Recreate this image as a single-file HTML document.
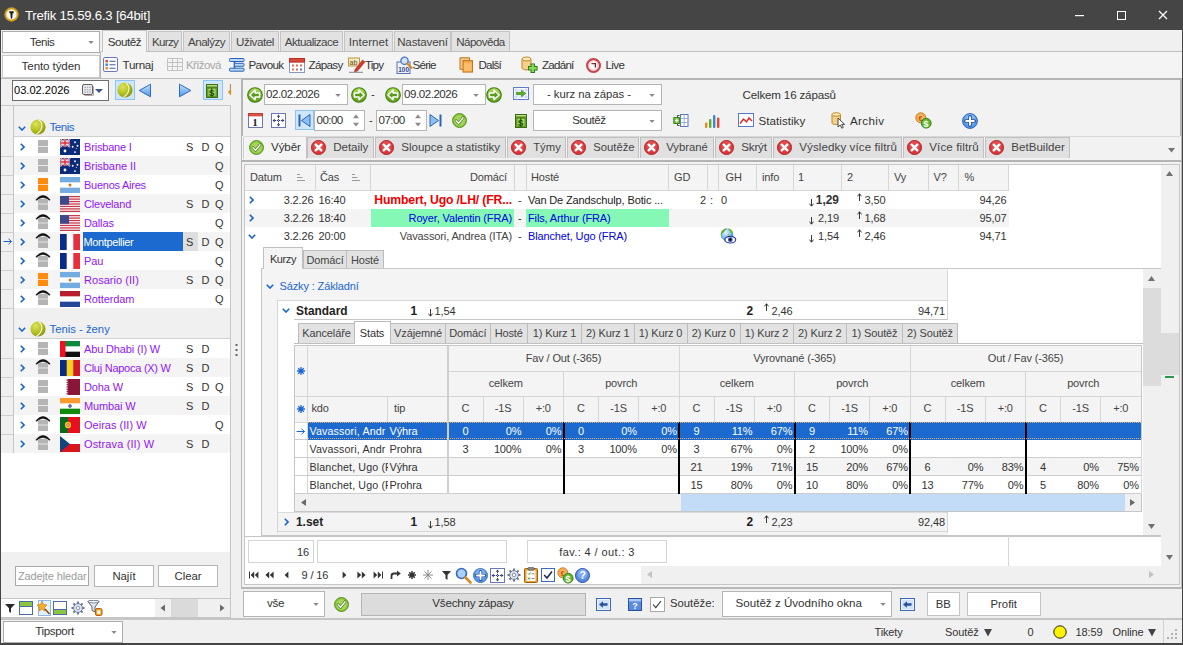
<!DOCTYPE html>
<html><head><meta charset="utf-8"><title>Trefik</title><style>
html,body{margin:0;padding:0}
body{width:1183px;height:645px;overflow:hidden;background:#f0f0f0;font-family:"Liberation Sans",sans-serif;position:relative}
.a{position:absolute;box-sizing:border-box;white-space:nowrap;overflow:hidden}
.t{position:absolute;white-space:nowrap}
svg{display:block}
</style></head><body>
<div class="a" style="left:0px;top:0px;width:1183px;height:30px;background:#454545"></div>
<svg class="a" style="left:3.5px;top:7.3px" width="16" height="16" viewBox="0 0 16 16"><circle cx="7.5" cy="7.5" r="7.2" fill="#c8981c"/><circle cx="7.5" cy="7.5" r="6" fill="#e0b030"/><circle cx="7.5" cy="7.5" r="5" fill="#fbf8f0"/><path d="M5.3 4.2 H9.7 V6.2 H8.6 L8.3 10.8 L7.5 12 L6.7 10.8 L6.4 6.2 H5.3 Z" fill="#1c1c1c"/></svg>
<div class="t" style="left:25px;top:6.5px;font-size:13.2px;line-height:17px;color:#fff;letter-spacing:-0.231px;">Trefik 15.59.6.3 [64bit]</div>
<svg class="a" style="left:1074px;top:14px" width="12" height="3" viewBox="0 0 12 3"><rect x="1" y="1" width="9" height="1.2" fill="#fff"/></svg>
<svg class="a" style="left:1116px;top:10px" width="11" height="11" viewBox="0 0 11 11"><rect x="1.5" y="1.5" width="8" height="8" fill="none" stroke="#fff" stroke-width="1"/></svg>
<svg class="a" style="left:1158px;top:10px" width="11" height="11" viewBox="0 0 11 11"><path d="M1 1 L9 9 M9 1 L1 9" stroke="#fff" stroke-width="1.2"/></svg>
<div class="a" style="left:2px;top:31px;width:98px;height:22px;background:#fff;border:1px solid #adadad"></div>
<div class="t" style="left:12px;top:33.5px;font-size:11.6px;line-height:16px;color:#333;width:60px;text-align:center;letter-spacing:-0.516px;">Tenis</div>
<svg class="a" style="left:87.5px;top:41.0px" width="6" height="3" viewBox="0 0 6 3"><path d="M0.3 0 H5.7 L3 3 Z" fill="#8a8a8a"/></svg>
<div class="a" style="left:101px;top:51px;width:1082px;height:1px;background:#c0c0c0"></div>
<div class="a" style="left:148px;top:31px;width:34px;height:20px;background:#e2e2e2;border:1px solid #c4c4c4;border-bottom:none"></div>
<div class="t" style="left:148px;top:33.5px;font-size:11.6px;line-height:16px;color:#444;width:34px;text-align:center;letter-spacing:-0.69px;">Kurzy</div>
<div class="a" style="left:183px;top:31px;width:47px;height:20px;background:#e2e2e2;border:1px solid #c4c4c4;border-bottom:none"></div>
<div class="t" style="left:183px;top:33.5px;font-size:11.6px;line-height:16px;color:#444;width:47px;text-align:center;letter-spacing:-0.517px;">Analýzy</div>
<div class="a" style="left:231px;top:31px;width:48px;height:20px;background:#e2e2e2;border:1px solid #c4c4c4;border-bottom:none"></div>
<div class="t" style="left:231px;top:33.5px;font-size:11.6px;line-height:16px;color:#444;width:48px;text-align:center;letter-spacing:-0.42px;">Uživatel</div>
<div class="a" style="left:280px;top:31px;width:63px;height:20px;background:#e2e2e2;border:1px solid #c4c4c4;border-bottom:none"></div>
<div class="t" style="left:280px;top:33.5px;font-size:11.6px;line-height:16px;color:#444;width:63px;text-align:center;letter-spacing:-0.547px;">Aktualizace</div>
<div class="a" style="left:344px;top:31px;width:49px;height:20px;background:#e2e2e2;border:1px solid #c4c4c4;border-bottom:none"></div>
<div class="t" style="left:344px;top:33.5px;font-size:11.6px;line-height:16px;color:#444;width:49px;text-align:center;letter-spacing:0.045px;">Internet</div>
<div class="a" style="left:394px;top:31px;width:57px;height:20px;background:#e2e2e2;border:1px solid #c4c4c4;border-bottom:none"></div>
<div class="t" style="left:394px;top:33.5px;font-size:11.6px;line-height:16px;color:#444;width:57px;text-align:center;letter-spacing:-0.17px;">Nastavení</div>
<div class="a" style="left:451px;top:31px;width:59px;height:20px;background:#e2e2e2;border:1px solid #c4c4c4;border-bottom:none"></div>
<div class="t" style="left:451px;top:33.5px;font-size:11.6px;line-height:16px;color:#444;width:59px;text-align:center;letter-spacing:-0.548px;">Nápověda</div>
<div class="a" style="left:102px;top:30px;width:45px;height:23px;background:#f4f4f4;border:1px solid #c4c4c4;border-bottom:none"></div>
<div class="t" style="left:102px;top:33.5px;font-size:11.6px;line-height:16px;color:#333;width:45px;text-align:center;letter-spacing:-0.436px;">Soutěž</div>
<div class="a" style="left:101px;top:52px;width:1082px;height:26px;background:#f4f4f4"></div>
<div class="a" style="left:2px;top:55px;width:98px;height:23px;background:#fff;border:1px solid #c8c8c8"></div>
<div class="t" style="left:2px;top:57.5px;font-size:11.6px;line-height:16px;color:#333;width:98px;text-align:center;letter-spacing:-0.107px;">Tento týden</div>
<div class="a" style="left:100px;top:52px;width:1px;height:26px;background:#b4b4b4"></div>
<svg class="a" style="left:103px;top:57px" width="15" height="15" viewBox="0 0 15 15"><rect x="0.5" y="0.5" width="14" height="14" rx="1.5" fill="#fdfdff" stroke="#6a78c0"/><rect x="2.5" y="3" width="2.4" height="2.4" fill="#d8452c"/><rect x="2.5" y="6.5" width="2.4" height="2.4" fill="#3a78d8"/><rect x="2.5" y="10" width="2.4" height="2.4" fill="#e08a1c"/><path d="M6.5 4.2 H12.5 M6.5 7.7 H12.5 M6.5 11.2 H12.5" stroke="#4a5a9a" stroke-width="1.1"/></svg>
<div class="t" style="left:122.5px;top:57.0px;font-size:11.6px;line-height:16px;color:#333;letter-spacing:-0.259px;">Turnaj</div>
<svg class="a" style="left:167px;top:58px" width="16" height="13" viewBox="0 0 16 13"><path d="M0.5 0.5 H15.5 V12.5 H0.5 Z M0.5 4.5 H15.5 M0.5 8.5 H15.5 M5.5 0.5 V12.5 M10.5 0.5 V12.5" fill="#f4f4f4" stroke="#c2c2c2"/></svg>
<div class="t" style="left:186px;top:57.0px;font-size:11.6px;line-height:16px;color:#a8a8a8;letter-spacing:-0.661px;">Křížová</div>
<svg class="a" style="left:229px;top:58px" width="16" height="14" viewBox="0 0 16 14"><path d="M5.5 2 V12" stroke="#2a62b8" stroke-width="1.6"/><g fill="#bcd8f6" stroke="#2a62b8" stroke-width="1"><rect x="0.5" y="0.5" width="14.5" height="3" rx="0.8"/><rect x="5.5" y="5.3" width="9.5" height="3" rx="0.8"/><rect x="0.5" y="10.2" width="14.5" height="3" rx="0.8"/></g></svg>
<div class="t" style="left:248.5px;top:57.0px;font-size:11.6px;line-height:16px;color:#333;letter-spacing:-0.615px;">Pavouk</div>
<svg class="a" style="left:289px;top:58px" width="16" height="15" viewBox="0 0 16 15"><rect x="0.5" y="0.5" width="15" height="14" fill="#fff" stroke="#8a98b8"/><rect x="0.5" y="0.5" width="15" height="3.6" fill="#d84838" stroke="#b83020"/><g fill="#e06a5a"><rect x="3" y="6.5" width="2" height="2"/><rect x="7" y="6.5" width="2" height="2"/><rect x="11" y="6.5" width="2" height="2"/><rect x="3" y="10.5" width="2" height="2"/><rect x="7" y="10.5" width="2" height="2"/></g><rect x="11" y="10.5" width="2" height="2" fill="#4a78d0"/></svg>
<div class="t" style="left:308.5px;top:57.0px;font-size:11.6px;line-height:16px;color:#333;letter-spacing:-0.64px;">Zápasy</div>
<svg class="a" style="left:348px;top:57px" width="18" height="16" viewBox="0 0 18 16"><rect x="0.5" y="1" width="11" height="8" fill="#f8e8b8" stroke="#b89848"/><text x="1.5" y="7.6" font-size="7" font-family="Liberation Sans" fill="#5a4a2a">ab</text><path d="M7 12.5 L14.5 3 L17 5 L9.5 14 L6.5 15 Z" fill="#d83828" stroke="#8a2018" stroke-width="0.5"/><path d="M1 15.3 H15" stroke="#888" stroke-width="1"/></svg>
<div class="t" style="left:365px;top:57.0px;font-size:11.6px;line-height:16px;color:#333;letter-spacing:-0.846px;">Tipy</div>
<svg class="a" style="left:396px;top:56px" width="17" height="18" viewBox="0 0 17 18"><rect x="1" y="6" width="13" height="11.5" fill="#eef2fc" stroke="#5a70b8"/><text x="2.2" y="15.6" font-size="6.5" font-family="Liberation Sans" fill="#3a4a8a" font-weight="bold">100</text><circle cx="8.5" cy="4.8" r="3.6" fill="#cfe4f8" stroke="#4a78c0" stroke-width="1.3"/><path d="M11.2 7.5 L15.5 11.8" stroke="#d88828" stroke-width="2.2" stroke-linecap="round"/></svg>
<div class="t" style="left:412.5px;top:57.0px;font-size:11.6px;line-height:16px;color:#333;letter-spacing:-0.776px;">Série</div>
<svg class="a" style="left:459px;top:57px" width="15" height="16" viewBox="0 0 15 16"><rect x="1" y="0.8" width="9.5" height="11.5" fill="#f4c888" stroke="#c07820"/><rect x="4" y="3.6" width="9.5" height="11.5" fill="#f8a848" stroke="#c07820"/><rect x="5" y="6" width="7.5" height="8" fill="#fbbf6c"/></svg>
<div class="t" style="left:478.5px;top:57.0px;font-size:11.6px;line-height:16px;color:#333;letter-spacing:-0.806px;">Další</div>
<svg class="a" style="left:521px;top:56px" width="17" height="18" viewBox="0 0 17 18"><path d="M1 3 V12 C1 14.5 10 14.5 10 12 V3" fill="#f4d08a" stroke="#c08a28"/><ellipse cx="5.5" cy="3" rx="4.5" ry="2" fill="#fbe8b8" stroke="#c08a28"/><path d="M11.8 7.4 V17 M7 12.2 H16.6" stroke="#2a7a1c" stroke-width="4.4"/><path d="M11.8 8.3 V16.1 M7.9 12.2 H15.7" stroke="#8ad858" stroke-width="2.5"/></svg>
<div class="t" style="left:542px;top:57.0px;font-size:11.6px;line-height:16px;color:#333;letter-spacing:-0.752px;">Zadání</div>
<svg class="a" style="left:586px;top:57.5px" width="15" height="15" viewBox="0 0 15 15"><circle cx="7.5" cy="7.5" r="6.4" fill="#fff" stroke="#c8444c" stroke-width="2.2"/><circle cx="7.5" cy="7.5" r="4.6" fill="none" stroke="#eeb4b8" stroke-width="0.9"/><path d="M5.4 5.6 H9.4 V9.6" fill="none" stroke="#7a2c34" stroke-width="1.4"/></svg>
<div class="t" style="left:605.5px;top:57.0px;font-size:11.6px;line-height:16px;color:#333;letter-spacing:-0.62px;">Live</div>
<div class="a" style="left:1px;top:78px;width:1181px;height:1px;background:#bcbcbc"></div>
<div class="a" style="left:0px;top:80px;width:232px;height:539px;background:#f0f0f0"></div>
<div class="a" style="left:12px;top:80px;width:97px;height:21px;background:#fff;border:1px solid #6e6e6e"></div>
<div class="t" style="left:14px;top:82.95px;font-size:11.1px;line-height:15.1px;color:#000;">03.02.2026</div>
<svg class="a" style="left:82px;top:84px" width="12" height="12" viewBox="0 0 12 12"><path d="M2.5 11.5 H11.5 V2.5" stroke="#b0a8a8" fill="none"/><rect x="0.5" y="0.5" width="10" height="10" rx="1.5" fill="#ececf0" stroke="#6a5c5c"/><g fill="#a8b0c0"><rect x="2.4" y="2.6" width="1.5" height="1.5"/><rect x="4.8" y="2.6" width="1.5" height="1.5"/><rect x="7.2" y="2.6" width="1.5" height="1.5"/><rect x="2.4" y="5" width="1.5" height="1.5"/><rect x="4.8" y="5" width="1.5" height="1.5"/><rect x="7.2" y="5" width="1.5" height="1.5"/><rect x="2.4" y="7.4" width="1.5" height="1.5"/><rect x="4.8" y="7.4" width="1.5" height="1.5"/><rect x="7.2" y="7.4" width="1.5" height="1.5"/></g></svg>
<svg class="a" style="left:95px;top:89px" width="8" height="4" viewBox="0 0 8 4"><path d="M0 0 H8 L4.0 4 Z" fill="#3a5a8a"/></svg>
<div class="a" style="left:114.5px;top:80px;width:20.5px;height:20px;background:#cfe6fa;border:1px solid #8cc4f4"></div>
<svg class="a" style="left:116.5px;top:82px" width="16" height="16" viewBox="0 0 16 16"><defs><radialGradient id="bl1" cx="0.35" cy="0.3" r="0.8"><stop offset="0" stop-color="#dce458"/><stop offset="0.55" stop-color="#b4c020"/><stop offset="1" stop-color="#7c8c0c"/></radialGradient></defs><circle cx="8" cy="8" r="7.6" fill="url(#bl1)"/><path d="M8.6 0.8 C13.4 3.6 13 11.4 6.6 15" fill="none" stroke="#f4f6dc" stroke-width="1.1"/></svg>
<svg class="a" style="left:138px;top:83px" width="14" height="15" viewBox="0 0 14 15"><defs><linearGradient id="tg1" x1="0" y1="0" x2="0" y2="1"><stop offset="0" stop-color="#c4e2fc"/><stop offset="1" stop-color="#4e96e6"/></linearGradient></defs><path d="M12.5 1.2 V13.8 L1.2 7.5 Z" fill="url(#tg1)" stroke="#2f6cc0" stroke-width="1"/></svg>
<svg class="a" style="left:178px;top:83px" width="14" height="15" viewBox="0 0 14 15"><defs><linearGradient id="tg2" x1="0" y1="0" x2="0" y2="1"><stop offset="0" stop-color="#c4e2fc"/><stop offset="1" stop-color="#4e96e6"/></linearGradient></defs><path d="M1.5 1.2 V13.8 L12.8 7.5 Z" fill="url(#tg2)" stroke="#2f6cc0" stroke-width="1"/></svg>
<div class="a" style="left:203px;top:80px;width:20px;height:20px;background:#cfe6fa;border:1px solid #8cc4f4"></div>
<svg class="a" style="left:206px;top:84px" width="12" height="14" viewBox="0 0 12 14"><rect x="0.5" y="0.5" width="11" height="13" fill="#6aa82c" stroke="#3c6e12"/><rect x="0.5" y="0.5" width="11" height="2.6" fill="#b8dc7c" stroke="#3c6e12"/><rect x="2" y="4.2" width="8" height="8" fill="#a4d65a" stroke="#4a7e1a" stroke-width="0.6"/><text x="3.1" y="11.6" font-size="9.5" font-weight="bold" font-family="Liberation Sans" fill="#1c4c08">$</text><path d="M5.75 3.8 V12.8" stroke="#1c4c08" stroke-width="0.9"/></svg>
<svg class="a" style="left:228px;top:84px" width="4" height="14" viewBox="0 0 4 14"><path d="M2.4 0 V11" stroke="#c8782c" stroke-width="1" fill="none"/><circle cx="1.8" cy="8" r="1.6" fill="#e08a1c"/></svg>
<div class="a" style="left:1px;top:105px;width:230px;height:494px;background:#f0f0f0;border:1px solid #c6c6c6;border-left:none"></div>
<div class="a" style="left:13px;top:105px;width:1px;height:494px;background:#c6c6c6"></div>
<div class="a" style="left:14px;top:106px;width:216px;height:30px;background:#f0f0f0"></div>
<div class="a" style="left:14px;top:135.5px;width:216px;height:1px;background:#d0d0d0"></div>
<svg class="a" style="left:18px;top:125.5px" width="8" height="5" viewBox="0 0 8 5"><path d="M0.8 0.8 L4 4 L7.2 0.8" fill="none" stroke="#1766c8" stroke-width="1.6"/></svg>
<svg class="a" style="left:29.5px;top:119px" width="16" height="16" viewBox="0 0 16 16"><defs><radialGradient id="bl2" cx="0.35" cy="0.3" r="0.8"><stop offset="0" stop-color="#dce458"/><stop offset="0.55" stop-color="#b4c020"/><stop offset="1" stop-color="#7c8c0c"/></radialGradient></defs><circle cx="8" cy="8" r="7.6" fill="url(#bl2)"/><path d="M8.6 0.8 C13.4 3.6 13 11.4 6.6 15" fill="none" stroke="#f4f6dc" stroke-width="1.1"/></svg>
<div class="t" style="left:49.5px;top:119.0px;font-size:11.6px;line-height:16px;color:#1a66d0;letter-spacing:-0.516px;">Tenis</div>
<div class="a" style="left:14px;top:137px;width:216px;height:19px;background:#fff"></div>
<div class="a" style="left:1px;top:155.5px;width:12px;height:1px;background:#cfcfcf"></div>
<svg class="a" style="left:20px;top:142.5px" width="5" height="8" viewBox="0 0 5 8"><path d="M0.8 0.8 L4 4 L0.8 7.2" fill="none" stroke="#1766c8" stroke-width="1.6"/></svg>
<svg class="a" style="left:38px;top:140px" width="10" height="13" viewBox="0 0 10 13"><rect x="0" y="0" width="10" height="13" fill="#b4b4b4"/><rect x="0" y="6" width="10" height="1" fill="#e8e8e8"/></svg>
<svg class="a" style="left:60px;top:138.5px" width="20" height="16" viewBox="0 0 20 15" preserveAspectRatio="none"><rect width="20" height="15" fill="#0a2a7a"/><path d="M0 0 L10 7.5 M10 0 L0 7.5" stroke="#fff" stroke-width="1.8"/><path d="M0 0 L10 7.5 M10 0 L0 7.5" stroke="#d8283c" stroke-width="0.8"/><path d="M5 0 V7.5 M0 3.75 H10" stroke="#fff" stroke-width="2.6"/><path d="M5 0 V7.5 M0 3.75 H10" stroke="#d8283c" stroke-width="1.4"/><circle cx="5" cy="11.3" r="1.4" fill="#fff"/><circle cx="15" cy="3" r="0.9" fill="#fff"/><circle cx="17.5" cy="6.3" r="0.9" fill="#fff"/><circle cx="15" cy="12.3" r="0.9" fill="#fff"/><circle cx="12.7" cy="7.3" r="0.9" fill="#fff"/><circle cx="16.3" cy="8.6" r="0.5" fill="#fff"/></svg>
<div class="t" style="left:84px;top:139.8px;font-size:11.0px;line-height:15px;color:#9116f5;letter-spacing:-0.183px;">Brisbane I</div>
<div class="t" style="left:186px;top:139.8px;font-size:11.0px;line-height:15px;color:#333;letter-spacing:-0.13px;">S</div>
<div class="t" style="left:201.5px;top:139.8px;font-size:11.0px;line-height:15px;color:#333;letter-spacing:-0.13px;">D</div>
<div class="t" style="left:215px;top:139.8px;font-size:11.0px;line-height:15px;color:#333;letter-spacing:-0.13px;">Q</div>
<div class="a" style="left:14px;top:156px;width:216px;height:19px;background:#f4f4f4"></div>
<div class="a" style="left:1px;top:174.5px;width:12px;height:1px;background:#cfcfcf"></div>
<svg class="a" style="left:20px;top:161.5px" width="5" height="8" viewBox="0 0 5 8"><path d="M0.8 0.8 L4 4 L0.8 7.2" fill="none" stroke="#1766c8" stroke-width="1.6"/></svg>
<svg class="a" style="left:38px;top:159px" width="10" height="13" viewBox="0 0 10 13"><rect x="0" y="0" width="10" height="13" fill="#b4b4b4"/><rect x="0" y="6" width="10" height="1" fill="#e8e8e8"/></svg>
<svg class="a" style="left:60px;top:157.5px" width="20" height="16" viewBox="0 0 20 15" preserveAspectRatio="none"><rect width="20" height="15" fill="#0a2a7a"/><path d="M0 0 L10 7.5 M10 0 L0 7.5" stroke="#fff" stroke-width="1.8"/><path d="M0 0 L10 7.5 M10 0 L0 7.5" stroke="#d8283c" stroke-width="0.8"/><path d="M5 0 V7.5 M0 3.75 H10" stroke="#fff" stroke-width="2.6"/><path d="M5 0 V7.5 M0 3.75 H10" stroke="#d8283c" stroke-width="1.4"/><circle cx="5" cy="11.3" r="1.4" fill="#fff"/><circle cx="15" cy="3" r="0.9" fill="#fff"/><circle cx="17.5" cy="6.3" r="0.9" fill="#fff"/><circle cx="15" cy="12.3" r="0.9" fill="#fff"/><circle cx="12.7" cy="7.3" r="0.9" fill="#fff"/><circle cx="16.3" cy="8.6" r="0.5" fill="#fff"/></svg>
<div class="t" style="left:84px;top:158.8px;font-size:11.0px;line-height:15px;color:#9116f5;letter-spacing:-0.044px;">Brisbane II</div>
<div class="t" style="left:215px;top:158.8px;font-size:11.0px;line-height:15px;color:#333;letter-spacing:-0.13px;">Q</div>
<div class="a" style="left:14px;top:175px;width:216px;height:19px;background:#fff"></div>
<div class="a" style="left:1px;top:193.5px;width:12px;height:1px;background:#cfcfcf"></div>
<svg class="a" style="left:20px;top:180.5px" width="5" height="8" viewBox="0 0 5 8"><path d="M0.8 0.8 L4 4 L0.8 7.2" fill="none" stroke="#1766c8" stroke-width="1.6"/></svg>
<svg class="a" style="left:38px;top:178px" width="10" height="13" viewBox="0 0 10 13"><rect x="0" y="0" width="10" height="13" fill="#ff8a0c"/><rect x="0" y="6" width="10" height="1" fill="#ffd6a0"/></svg>
<svg class="a" style="left:60px;top:176.5px" width="20" height="16" viewBox="0 0 20 15" preserveAspectRatio="none"><rect width="20" height="15" fill="#74acdf"/><rect y="5" width="20" height="5" fill="#fff"/><circle cx="10" cy="7.5" r="1.5" fill="#c8791d"/></svg>
<div class="t" style="left:84px;top:177.8px;font-size:11.0px;line-height:15px;color:#9116f5;letter-spacing:-0.252px;">Buenos Aires</div>
<div class="t" style="left:215px;top:177.8px;font-size:11.0px;line-height:15px;color:#333;letter-spacing:-0.13px;">Q</div>
<div class="a" style="left:14px;top:194px;width:216px;height:19px;background:#f4f4f4"></div>
<div class="a" style="left:1px;top:212.5px;width:12px;height:1px;background:#cfcfcf"></div>
<svg class="a" style="left:20px;top:199.5px" width="5" height="8" viewBox="0 0 5 8"><path d="M0.8 0.8 L4 4 L0.8 7.2" fill="none" stroke="#1766c8" stroke-width="1.6"/></svg>
<svg class="a" style="left:35px;top:194px" width="16" height="16" viewBox="0 0 16 16"><path d="M0.8 5.8 Q8 -3 15.2 5.8 L14.2 6.3 Q8 0.6 1.8 6.3 Z" fill="#111" stroke="#111" stroke-width="0.5"/><rect x="3" y="5" width="10" height="11" fill="#b4b4b4"/><rect x="3" y="9.5" width="10" height="1" fill="#e4e4e4"/></svg>
<svg class="a" style="left:60px;top:195.5px" width="20" height="16" viewBox="0 0 20 15" preserveAspectRatio="none"><rect width="20" height="15" fill="#fff"/><g fill="#c8384a"><rect y="0" width="20" height="1.2"/><rect y="2.3" width="20" height="1.2"/><rect y="4.6" width="20" height="1.2"/><rect y="6.9" width="20" height="1.2"/><rect y="9.2" width="20" height="1.2"/><rect y="11.5" width="20" height="1.2"/><rect y="13.8" width="20" height="1.2"/></g><rect width="9" height="8.1" fill="#3c4a8c"/></svg>
<div class="t" style="left:84px;top:196.8px;font-size:11.0px;line-height:15px;color:#9116f5;letter-spacing:-0.202px;">Cleveland</div>
<div class="t" style="left:186px;top:196.8px;font-size:11.0px;line-height:15px;color:#333;letter-spacing:-0.13px;">S</div>
<div class="t" style="left:201.5px;top:196.8px;font-size:11.0px;line-height:15px;color:#333;letter-spacing:-0.13px;">D</div>
<div class="t" style="left:215px;top:196.8px;font-size:11.0px;line-height:15px;color:#333;letter-spacing:-0.13px;">Q</div>
<div class="a" style="left:14px;top:213px;width:216px;height:19px;background:#fff"></div>
<div class="a" style="left:1px;top:231.5px;width:12px;height:1px;background:#cfcfcf"></div>
<svg class="a" style="left:20px;top:218.5px" width="5" height="8" viewBox="0 0 5 8"><path d="M0.8 0.8 L4 4 L0.8 7.2" fill="none" stroke="#1766c8" stroke-width="1.6"/></svg>
<svg class="a" style="left:35px;top:213px" width="16" height="16" viewBox="0 0 16 16"><path d="M0.8 5.8 Q8 -3 15.2 5.8 L14.2 6.3 Q8 0.6 1.8 6.3 Z" fill="#111" stroke="#111" stroke-width="0.5"/><rect x="3" y="5" width="10" height="11" fill="#b4b4b4"/><rect x="3" y="9.5" width="10" height="1" fill="#e4e4e4"/></svg>
<svg class="a" style="left:60px;top:214.5px" width="20" height="16" viewBox="0 0 20 15" preserveAspectRatio="none"><rect width="20" height="15" fill="#fff"/><g fill="#c8384a"><rect y="0" width="20" height="1.2"/><rect y="2.3" width="20" height="1.2"/><rect y="4.6" width="20" height="1.2"/><rect y="6.9" width="20" height="1.2"/><rect y="9.2" width="20" height="1.2"/><rect y="11.5" width="20" height="1.2"/><rect y="13.8" width="20" height="1.2"/></g><rect width="9" height="8.1" fill="#3c4a8c"/></svg>
<div class="t" style="left:84px;top:215.8px;font-size:11.0px;line-height:15px;color:#9116f5;letter-spacing:-0.13px;">Dallas</div>
<div class="t" style="left:215px;top:215.8px;font-size:11.0px;line-height:15px;color:#333;letter-spacing:-0.13px;">Q</div>
<div class="a" style="left:14px;top:232px;width:216px;height:19px;background:#f4f4f4"></div>
<div class="a" style="left:1px;top:250.5px;width:12px;height:1px;background:#cfcfcf"></div>
<svg class="a" style="left:20px;top:237.5px" width="5" height="8" viewBox="0 0 5 8"><path d="M0.8 0.8 L4 4 L0.8 7.2" fill="none" stroke="#1766c8" stroke-width="1.6"/></svg>
<svg class="a" style="left:35px;top:232px" width="16" height="16" viewBox="0 0 16 16"><path d="M0.8 5.8 Q8 -3 15.2 5.8 L14.2 6.3 Q8 0.6 1.8 6.3 Z" fill="#111" stroke="#111" stroke-width="0.5"/><rect x="3" y="5" width="10" height="11" fill="#b4b4b4"/><rect x="3" y="9.5" width="10" height="1" fill="#e4e4e4"/></svg>
<svg class="a" style="left:60px;top:233.5px" width="20" height="16" viewBox="0 0 20 15" preserveAspectRatio="none"><rect width="20" height="15" fill="#fff"/><rect width="6.7" height="15" fill="#0a2a8c"/><rect x="13.3" width="6.7" height="15" fill="#e8303c"/></svg>
<div class="a" style="left:83px;top:232px;width:100px;height:19px;background:#1c6ad0"></div>
<div class="a" style="left:183px;top:232px;width:15px;height:19px;background:#dedede"></div>
<div class="t" style="left:83.5px;top:234.8px;font-size:11.0px;line-height:15px;color:#fff;letter-spacing:-0.364px;">Montpellier</div>
<svg class="a" style="left:3px;top:238.0px" width="10" height="7" viewBox="0 0 10 7"><path d="M0.5 3.5 H8.5 M5.5 0.8 L8.5 3.5 L5.5 6.2" fill="none" stroke="#1766c8" stroke-width="1"/></svg>
<div class="t" style="left:186px;top:234.8px;font-size:11.0px;line-height:15px;color:#333;letter-spacing:-0.13px;">S</div>
<div class="t" style="left:201.5px;top:234.8px;font-size:11.0px;line-height:15px;color:#333;letter-spacing:-0.13px;">D</div>
<div class="t" style="left:215px;top:234.8px;font-size:11.0px;line-height:15px;color:#333;letter-spacing:-0.13px;">Q</div>
<div class="a" style="left:14px;top:251px;width:216px;height:19px;background:#fff"></div>
<div class="a" style="left:1px;top:269.5px;width:12px;height:1px;background:#cfcfcf"></div>
<svg class="a" style="left:20px;top:256.5px" width="5" height="8" viewBox="0 0 5 8"><path d="M0.8 0.8 L4 4 L0.8 7.2" fill="none" stroke="#1766c8" stroke-width="1.6"/></svg>
<svg class="a" style="left:35px;top:251px" width="16" height="16" viewBox="0 0 16 16"><path d="M0.8 5.8 Q8 -3 15.2 5.8 L14.2 6.3 Q8 0.6 1.8 6.3 Z" fill="#111" stroke="#111" stroke-width="0.5"/><rect x="3" y="5" width="10" height="11" fill="#b4b4b4"/><rect x="3" y="9.5" width="10" height="1" fill="#e4e4e4"/></svg>
<svg class="a" style="left:60px;top:252.5px" width="20" height="16" viewBox="0 0 20 15" preserveAspectRatio="none"><rect width="20" height="15" fill="#fff"/><rect width="6.7" height="15" fill="#0a2a8c"/><rect x="13.3" width="6.7" height="15" fill="#e8303c"/></svg>
<div class="t" style="left:84px;top:253.8px;font-size:11.0px;line-height:15px;color:#9116f5;letter-spacing:-0.13px;">Pau</div>
<div class="t" style="left:215px;top:253.8px;font-size:11.0px;line-height:15px;color:#333;letter-spacing:-0.13px;">Q</div>
<div class="a" style="left:14px;top:270px;width:216px;height:19px;background:#f4f4f4"></div>
<div class="a" style="left:1px;top:288.5px;width:12px;height:1px;background:#cfcfcf"></div>
<svg class="a" style="left:20px;top:275.5px" width="5" height="8" viewBox="0 0 5 8"><path d="M0.8 0.8 L4 4 L0.8 7.2" fill="none" stroke="#1766c8" stroke-width="1.6"/></svg>
<svg class="a" style="left:38px;top:273px" width="10" height="13" viewBox="0 0 10 13"><rect x="0" y="0" width="10" height="13" fill="#ff8a0c"/><rect x="0" y="6" width="10" height="1" fill="#ffd6a0"/></svg>
<svg class="a" style="left:60px;top:271.5px" width="20" height="16" viewBox="0 0 20 15" preserveAspectRatio="none"><rect width="20" height="15" fill="#74acdf"/><rect y="5" width="20" height="5" fill="#fff"/><circle cx="10" cy="7.5" r="1.5" fill="#c8791d"/></svg>
<div class="t" style="left:84px;top:272.8px;font-size:11.0px;line-height:15px;color:#9116f5;letter-spacing:0.042px;">Rosario (II)</div>
<div class="t" style="left:186px;top:272.8px;font-size:11.0px;line-height:15px;color:#333;letter-spacing:-0.13px;">S</div>
<div class="t" style="left:201.5px;top:272.8px;font-size:11.0px;line-height:15px;color:#333;letter-spacing:-0.13px;">D</div>
<div class="t" style="left:215px;top:272.8px;font-size:11.0px;line-height:15px;color:#333;letter-spacing:-0.13px;">Q</div>
<div class="a" style="left:14px;top:289px;width:216px;height:19px;background:#fff"></div>
<div class="a" style="left:1px;top:307.5px;width:12px;height:1px;background:#cfcfcf"></div>
<svg class="a" style="left:20px;top:294.5px" width="5" height="8" viewBox="0 0 5 8"><path d="M0.8 0.8 L4 4 L0.8 7.2" fill="none" stroke="#1766c8" stroke-width="1.6"/></svg>
<svg class="a" style="left:35px;top:289px" width="16" height="16" viewBox="0 0 16 16"><path d="M0.8 5.8 Q8 -3 15.2 5.8 L14.2 6.3 Q8 0.6 1.8 6.3 Z" fill="#111" stroke="#111" stroke-width="0.5"/><rect x="3" y="5" width="10" height="11" fill="#b4b4b4"/><rect x="3" y="9.5" width="10" height="1" fill="#e4e4e4"/></svg>
<svg class="a" style="left:60px;top:290.5px" width="20" height="16" viewBox="0 0 20 15" preserveAspectRatio="none"><rect width="20" height="15" fill="#fff"/><rect width="20" height="5" fill="#b8202c"/><rect y="10" width="20" height="5" fill="#25479a"/></svg>
<div class="t" style="left:84px;top:291.8px;font-size:11.0px;line-height:15px;color:#9116f5;letter-spacing:-0.13px;">Rotterdam</div>
<div class="t" style="left:215px;top:291.8px;font-size:11.0px;line-height:15px;color:#333;letter-spacing:-0.13px;">Q</div>
<div class="a" style="left:14px;top:308px;width:216px;height:31px;background:#f0f0f0"></div>
<div class="a" style="left:14px;top:337.5px;width:216px;height:1px;background:#d0d0d0"></div>
<svg class="a" style="left:18px;top:327.0px" width="8" height="5" viewBox="0 0 8 5"><path d="M0.8 0.8 L4 4 L7.2 0.8" fill="none" stroke="#1766c8" stroke-width="1.6"/></svg>
<svg class="a" style="left:29.5px;top:320.5px" width="16" height="16" viewBox="0 0 16 16"><defs><radialGradient id="bl3" cx="0.35" cy="0.3" r="0.8"><stop offset="0" stop-color="#dce458"/><stop offset="0.55" stop-color="#b4c020"/><stop offset="1" stop-color="#7c8c0c"/></radialGradient></defs><circle cx="8" cy="8" r="7.6" fill="url(#bl3)"/><path d="M8.6 0.8 C13.4 3.6 13 11.4 6.6 15" fill="none" stroke="#f4f6dc" stroke-width="1.1"/></svg>
<div class="t" style="left:49.5px;top:320.5px;font-size:11.3px;line-height:16px;color:#1a66d0;">Tenis - ženy</div>
<div class="a" style="left:14px;top:339px;width:216px;height:19px;background:#fff"></div>
<div class="a" style="left:1px;top:357.5px;width:12px;height:1px;background:#cfcfcf"></div>
<svg class="a" style="left:20px;top:344.5px" width="5" height="8" viewBox="0 0 5 8"><path d="M0.8 0.8 L4 4 L0.8 7.2" fill="none" stroke="#1766c8" stroke-width="1.6"/></svg>
<svg class="a" style="left:38px;top:342px" width="10" height="13" viewBox="0 0 10 13"><rect x="0" y="0" width="10" height="13" fill="#b4b4b4"/><rect x="0" y="6" width="10" height="1" fill="#e8e8e8"/></svg>
<svg class="a" style="left:60px;top:340.5px" width="20" height="16" viewBox="0 0 20 15" preserveAspectRatio="none"><rect width="20" height="15" fill="#fff"/><rect width="20" height="5" fill="#0a8a3c"/><rect y="10" width="20" height="5" fill="#111"/><rect width="5.5" height="15" fill="#f01020"/></svg>
<div class="t" style="left:84px;top:341.8px;font-size:11.0px;line-height:15px;color:#9116f5;letter-spacing:-0.143px;">Abu Dhabi (I) W</div>
<div class="t" style="left:186px;top:341.8px;font-size:11.0px;line-height:15px;color:#333;letter-spacing:-0.13px;">S</div>
<div class="t" style="left:201.5px;top:341.8px;font-size:11.0px;line-height:15px;color:#333;letter-spacing:-0.13px;">D</div>
<div class="a" style="left:14px;top:358px;width:216px;height:19px;background:#f4f4f4"></div>
<div class="a" style="left:1px;top:376.5px;width:12px;height:1px;background:#cfcfcf"></div>
<svg class="a" style="left:20px;top:363.5px" width="5" height="8" viewBox="0 0 5 8"><path d="M0.8 0.8 L4 4 L0.8 7.2" fill="none" stroke="#1766c8" stroke-width="1.6"/></svg>
<svg class="a" style="left:35px;top:358px" width="16" height="16" viewBox="0 0 16 16"><path d="M0.8 5.8 Q8 -3 15.2 5.8 L14.2 6.3 Q8 0.6 1.8 6.3 Z" fill="#111" stroke="#111" stroke-width="0.5"/><rect x="3" y="5" width="10" height="11" fill="#b4b4b4"/><rect x="3" y="9.5" width="10" height="1" fill="#e4e4e4"/></svg>
<svg class="a" style="left:60px;top:359.5px" width="20" height="16" viewBox="0 0 20 15" preserveAspectRatio="none"><rect width="20" height="15" fill="#f8d020"/><rect width="6.7" height="15" fill="#0a2a80"/><rect x="13.3" width="6.7" height="15" fill="#d01828"/></svg>
<div class="t" style="left:84px;top:360.8px;font-size:11.0px;line-height:15px;color:#9116f5;letter-spacing:-0.258px;">Cluj Napoca (X) W</div>
<div class="t" style="left:186px;top:360.8px;font-size:11.0px;line-height:15px;color:#333;letter-spacing:-0.13px;">S</div>
<div class="t" style="left:201.5px;top:360.8px;font-size:11.0px;line-height:15px;color:#333;letter-spacing:-0.13px;">D</div>
<div class="a" style="left:14px;top:377px;width:216px;height:19px;background:#fff"></div>
<div class="a" style="left:1px;top:395.5px;width:12px;height:1px;background:#cfcfcf"></div>
<svg class="a" style="left:20px;top:382.5px" width="5" height="8" viewBox="0 0 5 8"><path d="M0.8 0.8 L4 4 L0.8 7.2" fill="none" stroke="#1766c8" stroke-width="1.6"/></svg>
<svg class="a" style="left:38px;top:380px" width="10" height="13" viewBox="0 0 10 13"><rect x="0" y="0" width="10" height="13" fill="#b4b4b4"/><rect x="0" y="6" width="10" height="1" fill="#e8e8e8"/></svg>
<svg class="a" style="left:60px;top:378.5px" width="20" height="16" viewBox="0 0 20 15" preserveAspectRatio="none"><rect width="20" height="15" fill="#fff" opacity="0"/><rect x="6" width="14" height="15" fill="#8a1538"/><path d="M6 0 L8.5 0.85 L6 1.7 L8.5 2.5 L6 3.35 L8.5 4.2 L6 5 L8.5 5.85 L6 6.7 L8.5 7.5 L6 8.35 L8.5 9.2 L6 10 L8.5 10.85 L6 11.7 L8.5 12.5 L6 13.35 L8.5 14.2 L6 15 Z" fill="#f2f2f2"/></svg>
<div class="t" style="left:84px;top:379.8px;font-size:11.0px;line-height:15px;color:#9116f5;letter-spacing:-0.13px;">Doha W</div>
<div class="t" style="left:186px;top:379.8px;font-size:11.0px;line-height:15px;color:#333;letter-spacing:-0.13px;">S</div>
<div class="t" style="left:201.5px;top:379.8px;font-size:11.0px;line-height:15px;color:#333;letter-spacing:-0.13px;">D</div>
<div class="t" style="left:215px;top:379.8px;font-size:11.0px;line-height:15px;color:#333;letter-spacing:-0.13px;">Q</div>
<div class="a" style="left:14px;top:396px;width:216px;height:19px;background:#f4f4f4"></div>
<div class="a" style="left:1px;top:414.5px;width:12px;height:1px;background:#cfcfcf"></div>
<svg class="a" style="left:20px;top:401.5px" width="5" height="8" viewBox="0 0 5 8"><path d="M0.8 0.8 L4 4 L0.8 7.2" fill="none" stroke="#1766c8" stroke-width="1.6"/></svg>
<svg class="a" style="left:38px;top:399px" width="10" height="13" viewBox="0 0 10 13"><rect x="0" y="0" width="10" height="13" fill="#b4b4b4"/><rect x="0" y="6" width="10" height="1" fill="#e8e8e8"/></svg>
<svg class="a" style="left:60px;top:397.5px" width="20" height="16" viewBox="0 0 20 15" preserveAspectRatio="none"><rect width="20" height="15" fill="#fff"/><rect width="20" height="5" fill="#ff9a30"/><rect y="10" width="20" height="5" fill="#128a0c"/><circle cx="10" cy="7.5" r="1.7" fill="#2a2a9a"/><circle cx="10" cy="7.5" r="0.8" fill="#aab"/></svg>
<div class="t" style="left:84px;top:398.8px;font-size:11.0px;line-height:15px;color:#9116f5;letter-spacing:-0.13px;">Mumbai W</div>
<div class="t" style="left:186px;top:398.8px;font-size:11.0px;line-height:15px;color:#333;letter-spacing:-0.13px;">S</div>
<div class="t" style="left:201.5px;top:398.8px;font-size:11.0px;line-height:15px;color:#333;letter-spacing:-0.13px;">D</div>
<div class="a" style="left:14px;top:415px;width:216px;height:19px;background:#fff"></div>
<div class="a" style="left:1px;top:433.5px;width:12px;height:1px;background:#cfcfcf"></div>
<svg class="a" style="left:20px;top:420.5px" width="5" height="8" viewBox="0 0 5 8"><path d="M0.8 0.8 L4 4 L0.8 7.2" fill="none" stroke="#1766c8" stroke-width="1.6"/></svg>
<svg class="a" style="left:35px;top:415px" width="16" height="16" viewBox="0 0 16 16"><path d="M0.8 5.8 Q8 -3 15.2 5.8 L14.2 6.3 Q8 0.6 1.8 6.3 Z" fill="#111" stroke="#111" stroke-width="0.5"/><rect x="3" y="5" width="10" height="11" fill="#b4b4b4"/><rect x="3" y="9.5" width="10" height="1" fill="#e4e4e4"/></svg>
<svg class="a" style="left:60px;top:416.5px" width="20" height="16" viewBox="0 0 20 15" preserveAspectRatio="none"><rect width="20" height="15" fill="#e8101c"/><rect width="8" height="15" fill="#0a6a1c"/><circle cx="8" cy="7.5" r="3" fill="#f8d820"/><circle cx="8" cy="7.5" r="1.6" fill="#e03030"/><circle cx="8" cy="7.5" r="0.8" fill="#fff"/></svg>
<div class="t" style="left:84px;top:417.8px;font-size:11.0px;line-height:15px;color:#9116f5;letter-spacing:0.021px;">Oeiras (II) W</div>
<div class="t" style="left:215px;top:417.8px;font-size:11.0px;line-height:15px;color:#333;letter-spacing:-0.13px;">Q</div>
<div class="a" style="left:14px;top:434px;width:216px;height:19px;background:#f4f4f4"></div>
<div class="a" style="left:1px;top:452.5px;width:12px;height:1px;background:#cfcfcf"></div>
<svg class="a" style="left:20px;top:439.5px" width="5" height="8" viewBox="0 0 5 8"><path d="M0.8 0.8 L4 4 L0.8 7.2" fill="none" stroke="#1766c8" stroke-width="1.6"/></svg>
<svg class="a" style="left:35px;top:434px" width="16" height="16" viewBox="0 0 16 16"><path d="M0.8 5.8 Q8 -3 15.2 5.8 L14.2 6.3 Q8 0.6 1.8 6.3 Z" fill="#111" stroke="#111" stroke-width="0.5"/><rect x="3" y="5" width="10" height="11" fill="#b4b4b4"/><rect x="3" y="9.5" width="10" height="1" fill="#e4e4e4"/></svg>
<svg class="a" style="left:60px;top:435.5px" width="20" height="16" viewBox="0 0 20 15" preserveAspectRatio="none"><rect width="20" height="15" fill="#fff"/><rect y="7.5" width="20" height="7.5" fill="#d8141c"/><path d="M0 0 L10 7.5 L0 15 Z" fill="#12457c"/></svg>
<div class="t" style="left:84px;top:436.8px;font-size:11.0px;line-height:15px;color:#9116f5;letter-spacing:0.133px;">Ostrava (II) W</div>
<div class="t" style="left:186px;top:436.8px;font-size:11.0px;line-height:15px;color:#333;letter-spacing:-0.13px;">S</div>
<div class="t" style="left:201.5px;top:436.8px;font-size:11.0px;line-height:15px;color:#333;letter-spacing:-0.13px;">D</div>
<div class="a" style="left:1px;top:453px;width:229px;height:99px;background:#fff"></div>
<div class="a" style="left:1px;top:552px;width:230px;height:47px;background:#f0f0f0;border:1px solid #c6c6c6;border-top:none;border-left:none"></div>
<div class="a" style="left:15px;top:565.5px;width:74px;height:20.5px;background:#fff;border:1px solid #a8a8a8"></div>
<div class="t" style="left:18px;top:569.3px;font-size:11.0px;line-height:15px;color:#9a9a9a;letter-spacing:-0.13px;">Zadejte hledar</div>
<div class="a" style="left:94px;top:565px;width:60px;height:21.5px;background:#fff;border:1px solid #b4b4b4"></div>
<div class="t" style="left:94px;top:568.0px;font-size:11.3px;line-height:16px;color:#333;width:60px;text-align:center;">Najít</div>
<div class="a" style="left:158px;top:565px;width:60px;height:21.5px;background:#fff;border:1px solid #b4b4b4"></div>
<div class="t" style="left:158px;top:568.0px;font-size:11.3px;line-height:16px;color:#333;width:60px;text-align:center;">Clear</div>
<div class="a" style="left:1px;top:598px;width:230px;height:20px;background:#fff;border:1px solid #c6c6c6;border-left:none"></div>
<svg class="a" style="left:5px;top:603.5px" width="10" height="9" viewBox="0 0 10 9"><path d="M0 0 H10 L6 4.2 V9 L4 7.6 V4.2 Z" fill="#2a2a2a"/></svg>
<svg class="a" style="left:19px;top:601px" width="14" height="14" viewBox="0 0 14 14"><rect x="0.5" y="0.5" width="13" height="13" fill="#fff" stroke="#4a6aa8"/><rect x="1" y="1" width="12" height="4" fill="#8cc63f"/><path d="M1 5.5 H13" stroke="#4a6aa8"/></svg>
<svg class="a" style="left:36px;top:600px" width="15" height="16" viewBox="0 0 15 16"><rect x="2.5" y="0.5" width="12" height="15" fill="#e4f0fc" stroke="#8cb8ec"/><path d="M6 1 L7.5 4.5 L11 5 L8.5 7.5 L9 11 L6 9.2 L3 11 L3.5 7.5 L1 5 L4.5 4.5 Z" fill="#f8b020" stroke="#c07010" stroke-width="0.6"/><path d="M9 9 L13.5 14" stroke="#8a5a1c" stroke-width="1.8"/></svg>
<svg class="a" style="left:53px;top:601px" width="14" height="14" viewBox="0 0 14 14"><rect x="0.5" y="0.5" width="13" height="13" fill="#fff" stroke="#4a6aa8"/><rect x="1" y="9" width="12" height="4" fill="#8cc63f"/><path d="M1 8.5 H13" stroke="#4a6aa8"/></svg>
<svg class="a" style="left:71px;top:601px" width="14" height="14" viewBox="0 0 14 14"><circle cx="7" cy="7" r="4.4" fill="#e4e9f2" stroke="#6a7898" stroke-width="1"/><circle cx="7" cy="7" r="1.8" fill="#fff" stroke="#6a7898" stroke-width="0.8"/><g stroke="#6a7898" stroke-width="2"><path d="M7 0.5 V2.6 M7 11.4 V13.5 M0.5 7 H2.6 M11.4 7 H13.5 M2.4 2.4 L3.9 3.9 M10.1 10.1 L11.6 11.6 M2.4 11.6 L3.9 10.1 M10.1 3.9 L11.6 2.4"/></g></svg>
<svg class="a" style="left:87px;top:600px" width="16" height="16" viewBox="0 0 16 16"><path d="M1 1.5 C1 0 12 0 12 1.5 L8 7 V12 L5 10.5 V7 Z" fill="#dfe3ea" stroke="#5a6478"/><ellipse cx="6.5" cy="1.6" rx="5.4" ry="1.3" fill="#f6f8fb" stroke="#5a6478" stroke-width="0.7"/><rect x="8.5" y="8.5" width="6.5" height="7" rx="1.5" fill="#f8a020" stroke="#b06010"/><rect x="10.3" y="10.5" width="3" height="3.4" fill="#fff"/></svg>
<div class="a" style="left:155px;top:599px;width:75px;height:18px;background:#f0f0f0"></div>
<div class="a" style="left:171px;top:599px;width:27px;height:18px;background:#dadada"></div>
<svg class="a" style="left:160px;top:604px" width="6" height="8" viewBox="0 0 6 8"><path d="M5 0.5 V7.5 L0.5 4 Z" fill="#6a6a6a"/></svg>
<svg class="a" style="left:219px;top:604px" width="6" height="8" viewBox="0 0 6 8"><path d="M1 0.5 V7.5 L5.5 4 Z" fill="#6a6a6a"/></svg>
<div class="a" style="left:232px;top:80px;width:10px;height:539px;background:#f0f0f0"></div>
<div class="a" style="left:230px;top:105px;width:1px;height:514px;background:#c6c6c6"></div>
<svg class="a" style="left:235px;top:344px" width="3" height="12" viewBox="0 0 3 12"><rect x="0.5" y="0" width="2" height="2" fill="#666"/><rect x="0.5" y="5" width="2" height="2" fill="#666"/><rect x="0.5" y="10" width="2" height="2" fill="#666"/></svg>
<div class="a" style="left:241px;top:78px;width:941px;height:58px;background:#f2f2f2;border:2px solid #b4b4b4;border-bottom:none"></div>
<div class="a" style="left:241px;top:136px;width:941px;height:453px;background:#f2f2f2;border-left:1px solid #b8b8b8;border-right:1px solid #b8b8b8"></div>
<svg class="a" style="left:247px;top:86.5px" width="16" height="16" viewBox="0 0 16 16"><defs><linearGradient id="gg1" x1="0" y1="0" x2="0" y2="1"><stop offset="0" stop-color="#b8e060"/><stop offset="0.5" stop-color="#7cbc2c"/><stop offset="1" stop-color="#5c9c1c"/></linearGradient></defs><circle cx="8" cy="8" r="7.3" fill="url(#gg1)" stroke="#3f7c10" stroke-width="1.1"/><path d="M2.9 8 L8 3.2 V6 H12.6 V10 H8 V12.8 Z" fill="#5a9a1c" stroke="#fff" stroke-width="1.5" stroke-linejoin="round"/></svg>
<div class="a" style="left:264px;top:84px;width:84px;height:21px;background:#fff;border:1px solid #b4b4b4"></div>
<div class="t" style="left:266px;top:85.7px;font-size:11.6px;line-height:16px;color:#333;letter-spacing:-0.476px;">02.02.2026</div>
<svg class="a" style="left:334.5px;top:93.5px" width="6" height="3" viewBox="0 0 6 3"><path d="M0.3 0 H5.7 L3 3 Z" fill="#8a8a8a"/></svg>
<svg class="a" style="left:351px;top:86.5px" width="16" height="16" viewBox="0 0 16 16"><defs><linearGradient id="gg2" x1="0" y1="0" x2="0" y2="1"><stop offset="0" stop-color="#b8e060"/><stop offset="0.5" stop-color="#7cbc2c"/><stop offset="1" stop-color="#5c9c1c"/></linearGradient></defs><circle cx="8" cy="8" r="7.3" fill="url(#gg2)" stroke="#3f7c10" stroke-width="1.1"/><path d="M13.1 8 L8 3.2 V6 H3.4 V10 H8 V12.8 Z" fill="#5a9a1c" stroke="#fff" stroke-width="1.5" stroke-linejoin="round"/></svg>
<div class="t" style="left:371px;top:86.0px;font-size:11.3px;line-height:16px;color:#333;">-</div>
<svg class="a" style="left:385px;top:86.5px" width="16" height="16" viewBox="0 0 16 16"><defs><linearGradient id="gg3" x1="0" y1="0" x2="0" y2="1"><stop offset="0" stop-color="#b8e060"/><stop offset="0.5" stop-color="#7cbc2c"/><stop offset="1" stop-color="#5c9c1c"/></linearGradient></defs><circle cx="8" cy="8" r="7.3" fill="url(#gg3)" stroke="#3f7c10" stroke-width="1.1"/><path d="M2.9 8 L8 3.2 V6 H12.6 V10 H8 V12.8 Z" fill="#5a9a1c" stroke="#fff" stroke-width="1.5" stroke-linejoin="round"/></svg>
<div class="a" style="left:402px;top:84px;width:84px;height:21px;background:#fff;border:1px solid #b4b4b4"></div>
<div class="t" style="left:404px;top:85.7px;font-size:11.6px;line-height:16px;color:#333;letter-spacing:-0.476px;">09.02.2026</div>
<svg class="a" style="left:472.5px;top:93.5px" width="6" height="3" viewBox="0 0 6 3"><path d="M0.3 0 H5.7 L3 3 Z" fill="#8a8a8a"/></svg>
<svg class="a" style="left:486px;top:86.5px" width="16" height="16" viewBox="0 0 16 16"><defs><linearGradient id="gg4" x1="0" y1="0" x2="0" y2="1"><stop offset="0" stop-color="#b8e060"/><stop offset="0.5" stop-color="#7cbc2c"/><stop offset="1" stop-color="#5c9c1c"/></linearGradient></defs><circle cx="8" cy="8" r="7.3" fill="url(#gg4)" stroke="#3f7c10" stroke-width="1.1"/><path d="M13.1 8 L8 3.2 V6 H3.4 V10 H8 V12.8 Z" fill="#5a9a1c" stroke="#fff" stroke-width="1.5" stroke-linejoin="round"/></svg>
<svg class="a" style="left:513px;top:87px" width="16" height="13" viewBox="0 0 16 13"><rect x="0.5" y="0.5" width="15" height="12" fill="#fff" stroke="#5a78c8"/><path d="M0.5 3 H15.5 M0.5 10 H15.5 M3 0.5 V12.5 M13 0.5 V12.5" stroke="#b8c8ec" stroke-width="0.8"/><path d="M3.5 5.3 H8.5 V3.2 L12.8 6.5 L8.5 9.8 V7.7 H3.5 Z" fill="#5ab02c" stroke="#2a7a12" stroke-width="0.6"/></svg>
<div class="a" style="left:533px;top:84px;width:129px;height:21px;background:#fff;border:1px solid #b4b4b4"></div>
<div class="t" style="left:533px;top:85.7px;font-size:11.3px;line-height:16px;color:#333;width:112px;text-align:center;">- kurz na zápas -</div>
<svg class="a" style="left:648.5px;top:93.5px" width="6" height="3" viewBox="0 0 6 3"><path d="M0.3 0 H5.7 L3 3 Z" fill="#8a8a8a"/></svg>
<div class="t" style="left:742.5px;top:87.0px;font-size:11.6px;line-height:16px;color:#333;letter-spacing:-0.167px;">Celkem 16 zápasů</div>
<svg class="a" style="left:248px;top:113px" width="15" height="15" viewBox="0 0 15 15"><rect x="0.5" y="0.5" width="14" height="14" fill="#fff" stroke="#6a78b8"/><rect x="0.5" y="0.5" width="14" height="2.4" fill="#e05848" stroke="#c03828" stroke-width="0.8"/><text x="4.2" y="13" font-size="11" font-weight="bold" font-family="Liberation Serif" fill="#1c1c2c">1</text></svg>
<svg class="a" style="left:271px;top:113px" width="15" height="15" viewBox="0 0 15 15"><rect x="0.5" y="0.5" width="14" height="14" fill="#fff" stroke="#6a78b8"/><path d="M7.5 2 V13 M2 7.5 H13" stroke="#2a3a6a" stroke-width="1" stroke-dasharray="1.2 0.8"/><path d="M7.5 1.5 L5.8 3.8 H9.2 Z M7.5 13.5 L5.8 11.2 H9.2 Z M1.5 7.5 L3.8 5.8 V9.2 Z M13.5 7.5 L11.2 5.8 V9.2 Z" fill="#2a3a6a"/></svg>
<div class="a" style="left:295px;top:110px;width:19px;height:20px;background:#cfe6fa;border:1px solid #8cc4f4"></div>
<svg class="a" style="left:297px;top:113px" width="15" height="15" viewBox="0 0 15 15"><path d="M2.5 1.5 V13.5" stroke="#2a62b8" stroke-width="2"/><path d="M13 1.5 V13.5 L4.5 7.5 Z" fill="#8cc0f4" stroke="#2a62b8" stroke-width="1"/></svg>
<div class="a" style="left:314px;top:110px;width:51px;height:21px;background:#fff;border:1px solid #b4b4b4"></div>
<div class="t" style="left:316.5px;top:111.7px;font-size:11.6px;line-height:16px;color:#333;letter-spacing:-0.566px;">00:00</div>
<svg class="a" style="left:352px;top:113px" width="8" height="15" viewBox="0 0 8 15"><path d="M1 5.2 H7 L4 1.4 Z M1 9.8 H7 L4 13.6 Z" fill="#8a8a8a"/></svg>
<div class="t" style="left:369px;top:112.0px;font-size:11.3px;line-height:16px;color:#333;">-</div>
<div class="a" style="left:376px;top:110px;width:51px;height:21px;background:#fff;border:1px solid #b4b4b4"></div>
<div class="t" style="left:378.5px;top:111.7px;font-size:11.6px;line-height:16px;color:#333;letter-spacing:-0.566px;">07:00</div>
<svg class="a" style="left:414px;top:113px" width="8" height="15" viewBox="0 0 8 15"><path d="M1 5.2 H7 L4 1.4 Z M1 9.8 H7 L4 13.6 Z" fill="#8a8a8a"/></svg>
<svg class="a" style="left:428px;top:113px" width="15" height="15" viewBox="0 0 15 15"><path d="M12.5 1.5 V13.5" stroke="#2a62b8" stroke-width="2"/><path d="M2 1.5 V13.5 L10.5 7.5 Z" fill="#8cc0f4" stroke="#2a62b8" stroke-width="1"/></svg>
<svg class="a" style="left:452.0px;top:113.0px" width="15.0" height="15.0" viewBox="0 0 16 16"><circle cx="8" cy="8" r="7.4" fill="#8cc63f" stroke="#4d8a17" stroke-width="1"/><circle cx="8" cy="8" r="5.6" fill="#a5d65a"/><path d="M4.3 8.2 L7 11 L11.8 5" fill="none" stroke="#3c6e12" stroke-width="2.8" stroke-linecap="round" stroke-linejoin="round"/><path d="M4.3 8.2 L7 11 L11.8 5" fill="none" stroke="#fff" stroke-width="1.5" stroke-linecap="round" stroke-linejoin="round"/></svg>
<svg class="a" style="left:515px;top:114px" width="12" height="14" viewBox="0 0 12 14"><rect x="0.5" y="0.5" width="11" height="13" fill="#6aa82c" stroke="#3c6e12"/><rect x="0.5" y="0.5" width="11" height="2.6" fill="#b8dc7c" stroke="#3c6e12"/><rect x="2" y="4.2" width="8" height="8" fill="#a4d65a" stroke="#4a7e1a" stroke-width="0.6"/><text x="3.1" y="11.6" font-size="9.5" font-weight="bold" font-family="Liberation Sans" fill="#1c4c08">$</text><path d="M5.75 3.8 V12.8" stroke="#1c4c08" stroke-width="0.9"/></svg>
<div class="a" style="left:533px;top:110px;width:129px;height:21px;background:#fff;border:1px solid #b4b4b4"></div>
<div class="t" style="left:533px;top:111.7px;font-size:11.6px;line-height:16px;color:#333;width:112px;text-align:center;letter-spacing:-0.436px;">Soutěž</div>
<svg class="a" style="left:648.5px;top:119.5px" width="6" height="3" viewBox="0 0 6 3"><path d="M0.3 0 H5.7 L3 3 Z" fill="#8a8a8a"/></svg>
<svg class="a" style="left:673px;top:113px" width="16" height="15" viewBox="0 0 16 15"><rect x="7.5" y="1.5" width="7.5" height="12" fill="#fff" stroke="#5a78b8"/><path d="M7.5 5.5 H15 M7.5 9.5 H15 M11.2 1.5 V13.5" stroke="#8aa0d0" stroke-width="0.8"/><path d="M6.5 2.5 H4.5 V12.5 H6.5" fill="none" stroke="#333" stroke-width="0.9"/><rect x="0.8" y="4.6" width="5.8" height="5.8" fill="#7ac83c" stroke="#2a7a12" stroke-width="0.9"/><path d="M3.7 5.8 V9.2 M2 7.5 H5.4" stroke="#fff" stroke-width="1.2"/></svg>
<svg class="a" style="left:704px;top:112px" width="17" height="16" viewBox="0 0 17 16"><rect x="1" y="10.5" width="2.4" height="5.5" rx="1" fill="#e88a1c"/><rect x="5" y="7" width="2.4" height="9" rx="1" fill="#5ab02c"/><rect x="9" y="3" width="2.4" height="13" rx="1" fill="#3a88d8"/><rect x="13" y="5.5" width="2.4" height="10.5" rx="1" fill="#e04838"/></svg>
<svg class="a" style="left:738px;top:113px" width="16" height="14" viewBox="0 0 16 14"><rect x="0.5" y="0.5" width="15" height="13" fill="#fff" stroke="#5a78c8"/><path d="M2 10.5 L5.5 6 L8.5 8.8 L11 5 L14 8" fill="none" stroke="#d83028" stroke-width="1.5"/></svg>
<div class="t" style="left:758.5px;top:112.5px;font-size:11.6px;line-height:16px;color:#333;letter-spacing:0.039px;">Statistiky</div>
<svg class="a" style="left:831px;top:112px" width="15" height="17" viewBox="0 0 15 17"><path d="M1 2.5 V11 C1 13 9.5 13 9.5 11 V2.5" fill="#f4d08a" stroke="#c08a28"/><ellipse cx="5.25" cy="2.5" rx="4.25" ry="1.8" fill="#fbe8b8" stroke="#c08a28"/><path d="M7 6 V15 L9.2 13 L10.8 16.2 L12.3 15.4 L10.7 12.4 H13.6 Z" fill="#fff" stroke="#333" stroke-width="0.9"/></svg>
<div class="t" style="left:850px;top:112.5px;font-size:11.6px;line-height:16px;color:#333;letter-spacing:0.378px;">Archiv</div>
<svg class="a" style="left:915px;top:112px" width="17" height="17" viewBox="0 0 17 17"><circle cx="5.8" cy="5.8" r="5" fill="#f8bc68" stroke="#c8701c" stroke-width="0.9"/><circle cx="5.8" cy="5.8" r="3.6" fill="none" stroke="#e89a40" stroke-width="0.7"/><text x="3.4" y="8.6" font-size="7.5" font-weight="bold" font-family="Liberation Sans" fill="#c05a08">€</text><circle cx="11.2" cy="11.2" r="4.9" fill="#62b82a" stroke="#2a7a12" stroke-width="0.9"/><text x="8.2" y="14.6" font-size="9.5" font-weight="bold" font-family="Liberation Sans" fill="#fff">$</text></svg>
<svg class="a" style="left:962px;top:112.5px" width="16" height="16" viewBox="0 0 16 16"><circle cx="8" cy="8" r="7.4" fill="#5a9ae8" stroke="#2a62b8"/><circle cx="8" cy="6.5" r="5.4" fill="#8cc0f8" opacity="0.7"/><path d="M8 3.8 V12.2 M3.8 8 H12.2" stroke="#2a52a0" stroke-width="3.6" stroke-linecap="round"/><path d="M8 4.2 V11.8 M4.2 8 H11.8" stroke="#fff" stroke-width="2" stroke-linecap="round"/></svg>
<div class="a" style="left:244px;top:136px;width:936px;height:1px;background:#d8d8d8"></div>
<div class="a" style="left:242px;top:159.5px;width:939px;height:2px;background:#b4b4b4"></div>
<div class="a" style="left:307px;top:137px;width:67px;height:21px;background:#e0e0e0;border:1px solid #c0c0c0;border-bottom:none"></div>
<svg class="a" style="left:311.0px;top:139.5px" width="15.0" height="15.0" viewBox="0 0 16 16"><circle cx="8" cy="8" r="7.5" fill="#d9383a" stroke="#b02024" stroke-width="1"/><circle cx="8" cy="6.5" r="5.6" fill="#e8595a" opacity="0.6"/><path d="M5 5 L11 11 M11 5 L5 11" stroke="#fff" stroke-width="2.6" stroke-linecap="round"/></svg>
<div class="t" style="left:333.2px;top:139.0px;font-size:11.6px;line-height:16px;color:#444;letter-spacing:-0.051px;">Detaily</div>
<div class="a" style="left:375px;top:137px;width:131px;height:21px;background:#e0e0e0;border:1px solid #c0c0c0;border-bottom:none"></div>
<svg class="a" style="left:379.0px;top:139.5px" width="15.0" height="15.0" viewBox="0 0 16 16"><circle cx="8" cy="8" r="7.5" fill="#d9383a" stroke="#b02024" stroke-width="1"/><circle cx="8" cy="6.5" r="5.6" fill="#e8595a" opacity="0.6"/><path d="M5 5 L11 11 M11 5 L5 11" stroke="#fff" stroke-width="2.6" stroke-linecap="round"/></svg>
<div class="t" style="left:401.2px;top:139.0px;font-size:11.6px;line-height:16px;color:#444;letter-spacing:-0.019px;">Sloupce a statistiky</div>
<div class="a" style="left:507px;top:137px;width:59px;height:21px;background:#e0e0e0;border:1px solid #c0c0c0;border-bottom:none"></div>
<svg class="a" style="left:511.0px;top:139.5px" width="15.0" height="15.0" viewBox="0 0 16 16"><circle cx="8" cy="8" r="7.5" fill="#d9383a" stroke="#b02024" stroke-width="1"/><circle cx="8" cy="6.5" r="5.6" fill="#e8595a" opacity="0.6"/><path d="M5 5 L11 11 M11 5 L5 11" stroke="#fff" stroke-width="2.6" stroke-linecap="round"/></svg>
<div class="t" style="left:533.2px;top:139.0px;font-size:11.3px;line-height:16px;color:#444;">Týmy</div>
<div class="a" style="left:567px;top:137px;width:72px;height:21px;background:#e0e0e0;border:1px solid #c0c0c0;border-bottom:none"></div>
<svg class="a" style="left:571.0px;top:139.5px" width="15.0" height="15.0" viewBox="0 0 16 16"><circle cx="8" cy="8" r="7.5" fill="#d9383a" stroke="#b02024" stroke-width="1"/><circle cx="8" cy="6.5" r="5.6" fill="#e8595a" opacity="0.6"/><path d="M5 5 L11 11 M11 5 L5 11" stroke="#fff" stroke-width="2.6" stroke-linecap="round"/></svg>
<div class="t" style="left:593.2px;top:139.0px;font-size:11.3px;line-height:16px;color:#444;">Soutěže</div>
<div class="a" style="left:640px;top:137px;width:74px;height:21px;background:#e0e0e0;border:1px solid #c0c0c0;border-bottom:none"></div>
<svg class="a" style="left:644.0px;top:139.5px" width="15.0" height="15.0" viewBox="0 0 16 16"><circle cx="8" cy="8" r="7.5" fill="#d9383a" stroke="#b02024" stroke-width="1"/><circle cx="8" cy="6.5" r="5.6" fill="#e8595a" opacity="0.6"/><path d="M5 5 L11 11 M11 5 L5 11" stroke="#fff" stroke-width="2.6" stroke-linecap="round"/></svg>
<div class="t" style="left:666.2px;top:139.0px;font-size:11.3px;line-height:16px;color:#444;">Vybrané</div>
<div class="a" style="left:715px;top:137px;width:57px;height:21px;background:#e0e0e0;border:1px solid #c0c0c0;border-bottom:none"></div>
<svg class="a" style="left:719.0px;top:139.5px" width="15.0" height="15.0" viewBox="0 0 16 16"><circle cx="8" cy="8" r="7.5" fill="#d9383a" stroke="#b02024" stroke-width="1"/><circle cx="8" cy="6.5" r="5.6" fill="#e8595a" opacity="0.6"/><path d="M5 5 L11 11 M11 5 L5 11" stroke="#fff" stroke-width="2.6" stroke-linecap="round"/></svg>
<div class="t" style="left:741.2px;top:139.0px;font-size:11.6px;line-height:16px;color:#444;letter-spacing:-0.165px;">Skrýt</div>
<div class="a" style="left:773px;top:137px;width:129px;height:21px;background:#e0e0e0;border:1px solid #c0c0c0;border-bottom:none"></div>
<svg class="a" style="left:777.0px;top:139.5px" width="15.0" height="15.0" viewBox="0 0 16 16"><circle cx="8" cy="8" r="7.5" fill="#d9383a" stroke="#b02024" stroke-width="1"/><circle cx="8" cy="6.5" r="5.6" fill="#e8595a" opacity="0.6"/><path d="M5 5 L11 11 M11 5 L5 11" stroke="#fff" stroke-width="2.6" stroke-linecap="round"/></svg>
<div class="t" style="left:799.2px;top:139.0px;font-size:11.6px;line-height:16px;color:#444;letter-spacing:0.087px;">Výsledky více filtrů</div>
<div class="a" style="left:903px;top:137px;width:81px;height:21px;background:#e0e0e0;border:1px solid #c0c0c0;border-bottom:none"></div>
<svg class="a" style="left:907.0px;top:139.5px" width="15.0" height="15.0" viewBox="0 0 16 16"><circle cx="8" cy="8" r="7.5" fill="#d9383a" stroke="#b02024" stroke-width="1"/><circle cx="8" cy="6.5" r="5.6" fill="#e8595a" opacity="0.6"/><path d="M5 5 L11 11 M11 5 L5 11" stroke="#fff" stroke-width="2.6" stroke-linecap="round"/></svg>
<div class="t" style="left:929.2px;top:139.0px;font-size:11.6px;line-height:16px;color:#444;letter-spacing:0.123px;">Více filtrů</div>
<div class="a" style="left:985px;top:137px;width:85px;height:21px;background:#e0e0e0;border:1px solid #c0c0c0;border-bottom:none"></div>
<svg class="a" style="left:989.0px;top:139.5px" width="15.0" height="15.0" viewBox="0 0 16 16"><circle cx="8" cy="8" r="7.5" fill="#d9383a" stroke="#b02024" stroke-width="1"/><circle cx="8" cy="6.5" r="5.6" fill="#e8595a" opacity="0.6"/><path d="M5 5 L11 11 M11 5 L5 11" stroke="#fff" stroke-width="2.6" stroke-linecap="round"/></svg>
<div class="t" style="left:1011.2px;top:139.0px;font-size:11.6px;line-height:16px;color:#444;letter-spacing:0.016px;">BetBuilder</div>
<div class="a" style="left:243px;top:137px;width:64px;height:22px;background:#f4f4f4;border-right:1px solid #c4c4c4;border-left:1px solid #d0d0d0"></div>
<svg class="a" style="left:249.0px;top:139.5px" width="15.0" height="15.0" viewBox="0 0 16 16"><circle cx="8" cy="8" r="7.4" fill="#8cc63f" stroke="#4d8a17" stroke-width="1"/><circle cx="8" cy="8" r="5.6" fill="#a5d65a"/><path d="M4.3 8.2 L7 11 L11.8 5" fill="none" stroke="#3c6e12" stroke-width="2.8" stroke-linecap="round" stroke-linejoin="round"/><path d="M4.3 8.2 L7 11 L11.8 5" fill="none" stroke="#fff" stroke-width="1.5" stroke-linecap="round" stroke-linejoin="round"/></svg>
<div class="t" style="left:271px;top:139.0px;font-size:11.6px;line-height:16px;color:#333;letter-spacing:-0.081px;">Výběr</div>
<svg class="a" style="left:1167.5px;top:148px" width="7" height="5" viewBox="0 0 7 5"><path d="M0 0 H7 L3.5 4.6 Z" fill="#747474"/></svg>
<div class="a" style="left:244px;top:164px;width:936px;height:421px;background:#fff;border:1px solid #c6c6c6"></div>
<div class="a" style="left:245px;top:165px;width:763.5px;height:25.5px;background:#f4f4f4;border-bottom:1px solid #d6d6d6"></div>
<div class="a" style="left:314.5px;top:165px;width:1px;height:25px;background:#d6d6d6"></div>
<div class="t" style="left:250px;top:170.3px;font-size:11.0px;line-height:15px;color:#444;letter-spacing:-0.13px;">Datum</div>
<div class="a" style="left:370.0px;top:165px;width:1px;height:25px;background:#d6d6d6"></div>
<div class="t" style="left:320px;top:170.3px;font-size:11.0px;line-height:15px;color:#444;letter-spacing:-0.13px;">Čas</div>
<div class="a" style="left:513.5px;top:165px;width:1px;height:25px;background:#d6d6d6"></div>
<div class="t" style="left:370.5px;top:170.3px;font-size:11.0px;line-height:15px;color:#444;width:136.5px;text-align:right;letter-spacing:-0.13px;">Domácí</div>
<div class="a" style="left:525.5px;top:165px;width:1px;height:25px;background:#d6d6d6"></div>
<div class="a" style="left:668.0px;top:165px;width:1px;height:25px;background:#d6d6d6"></div>
<div class="t" style="left:531px;top:170.3px;font-size:11.0px;line-height:15px;color:#444;letter-spacing:-0.13px;">Hosté</div>
<div class="a" style="left:706.5px;top:165px;width:1px;height:25px;background:#d6d6d6"></div>
<div class="t" style="left:674px;top:170.3px;font-size:11.0px;line-height:15px;color:#444;letter-spacing:-0.13px;">GD</div>
<div class="a" style="left:718.0px;top:165px;width:1px;height:25px;background:#d6d6d6"></div>
<div class="a" style="left:756.0px;top:165px;width:1px;height:25px;background:#d6d6d6"></div>
<div class="t" style="left:725.5px;top:170.3px;font-size:11.0px;line-height:15px;color:#444;letter-spacing:-0.13px;">GH</div>
<div class="a" style="left:792.5px;top:165px;width:1px;height:25px;background:#d6d6d6"></div>
<div class="t" style="left:762px;top:170.3px;font-size:11.0px;line-height:15px;color:#444;letter-spacing:-0.13px;">info</div>
<div class="a" style="left:840.5px;top:165px;width:1px;height:25px;background:#d6d6d6"></div>
<div class="t" style="left:798px;top:170.3px;font-size:11.0px;line-height:15px;color:#444;letter-spacing:-0.13px;">1</div>
<div class="a" style="left:888.0px;top:165px;width:1px;height:25px;background:#d6d6d6"></div>
<div class="t" style="left:847px;top:170.3px;font-size:11.0px;line-height:15px;color:#444;letter-spacing:-0.13px;">2</div>
<div class="a" style="left:928.0px;top:165px;width:1px;height:25px;background:#d6d6d6"></div>
<div class="t" style="left:894px;top:170.3px;font-size:11.0px;line-height:15px;color:#444;letter-spacing:-0.13px;">Vy</div>
<div class="a" style="left:958.0px;top:165px;width:1px;height:25px;background:#d6d6d6"></div>
<div class="t" style="left:933.5px;top:170.3px;font-size:11.0px;line-height:15px;color:#444;letter-spacing:-0.13px;">V?</div>
<div class="a" style="left:1008.0px;top:165px;width:1px;height:25px;background:#d6d6d6"></div>
<div class="t" style="left:964.5px;top:170.3px;font-size:11.0px;line-height:15px;color:#444;letter-spacing:-0.13px;">%</div>
<svg class="a" style="left:296.5px;top:174px" width="8" height="7" viewBox="0 0 8 7"><path d="M0 0.5 H3 M0 3.5 H5.5 M0 6.5 H8" stroke="#9a9a9a" stroke-width="1"/></svg>
<svg class="a" style="left:351.5px;top:174px" width="8" height="7" viewBox="0 0 8 7"><path d="M0 0.5 H3 M0 3.5 H5.5 M0 6.5 H8" stroke="#9a9a9a" stroke-width="1"/></svg>
<div class="a" style="left:1161px;top:165px;width:18px;height:401px;background:#f0f0f0"></div>
<div class="a" style="left:1161px;top:333px;width:18px;height:42px;background:#dcdcdc"></div>
<svg class="a" style="left:1165.5px;top:170.5px" width="7" height="5" viewBox="0 0 7 5"><path d="M0 5 H7 L3.5 0 Z" fill="#707070"/></svg>
<svg class="a" style="left:1165.5px;top:554.5px" width="7" height="5" viewBox="0 0 7 5"><path d="M0 0 H7 L3.5 5 Z" fill="#707070"/></svg>
<div class="a" style="left:245px;top:190.5px;width:763.5px;height:18px;background:#fff"></div>
<svg class="a" style="left:249px;top:195.5px" width="5" height="8" viewBox="0 0 5 8"><path d="M0.8 0.8 L4 4 L0.8 7.2" fill="none" stroke="#1766c8" stroke-width="1.6"/></svg>
<div class="t" style="left:270px;top:192.8px;font-size:11.0px;line-height:15px;color:#333;width:43.5px;text-align:right;letter-spacing:-0.13px;">3.2.26</div>
<div class="t" style="left:318.5px;top:192.8px;font-size:11.0px;line-height:15px;color:#333;letter-spacing:-0.13px;">16:40</div>
<div class="t" style="left:371px;top:192.8px;width:141px;text-align:right;font-size:11px;letter-spacing:-0.13px;line-height:15px;color:#f00000;font-weight:bold;font-size:12.2px">Humbert, Ugo /LH/ (FR...</div>
<div class="t" style="left:518px;top:192.8px;font-size:11.0px;line-height:15px;color:#333;letter-spacing:-0.13px;">-</div>
<div class="t" style="left:528px;top:192.8px;font-size:11px;letter-spacing:-0.13px;line-height:15px;color:#222">Van De Zandschulp, Botic ...</div>
<div class="t" style="left:690px;top:192.8px;font-size:11.0px;line-height:15px;color:#333;width:16px;text-align:right;letter-spacing:-0.13px;">2</div>
<div class="t" style="left:710px;top:192.8px;font-size:11.0px;line-height:15px;color:#333;letter-spacing:-0.13px;">:</div>
<div class="t" style="left:721px;top:192.8px;font-size:11.0px;line-height:15px;color:#333;letter-spacing:-0.13px;">0</div>
<svg class="a" style="left:808.5px;top:198.5px" width="5" height="8" viewBox="0 0 5 8"><path d="M2.5 0 V7 M0.4 4.6 L2.5 7.2 L4.6 4.6" fill="none" stroke="#222" stroke-width="0.9"/></svg>
<div class="t" style="left:800px;top:192.8px;font-size:11.9px;line-height:15px;color:#333;font-weight:bold;width:39px;text-align:right;">1,29</div>
<svg class="a" style="left:857.0px;top:192.5px" width="5" height="8" viewBox="0 0 5 8"><path d="M2.5 8 V0.8 M0.4 3.4 L2.5 0.8 L4.6 3.4" fill="none" stroke="#222" stroke-width="0.9"/></svg>
<div class="t" style="left:864.5px;top:192.8px;font-size:11.0px;line-height:15px;color:#333;letter-spacing:-0.13px;">3,50</div>
<div class="t" style="left:960px;top:192.8px;font-size:11.0px;line-height:15px;color:#333;width:46.5px;text-align:right;letter-spacing:-0.13px;">94,26</div>
<div class="a" style="left:245px;top:208.5px;width:763.5px;height:18px;background:#f4f4f4"></div>
<svg class="a" style="left:249px;top:213.5px" width="5" height="8" viewBox="0 0 5 8"><path d="M0.8 0.8 L4 4 L0.8 7.2" fill="none" stroke="#1766c8" stroke-width="1.6"/></svg>
<div class="t" style="left:270px;top:210.8px;font-size:11.0px;line-height:15px;color:#333;width:43.5px;text-align:right;letter-spacing:-0.13px;">3.2.26</div>
<div class="t" style="left:318.5px;top:210.8px;font-size:11.0px;line-height:15px;color:#333;letter-spacing:-0.13px;">18:40</div>
<div class="a" style="left:371px;top:208.5px;width:143px;height:18px;background:#84f8b4"></div>
<div class="a" style="left:526px;top:208.5px;width:142.5px;height:18px;background:#84f8b4"></div>
<div class="t" style="left:371px;top:210.8px;width:141px;text-align:right;font-size:11px;letter-spacing:-0.13px;line-height:15px;color:#0000e0">Royer, Valentin (FRA)</div>
<div class="t" style="left:518px;top:210.8px;font-size:11.0px;line-height:15px;color:#333;letter-spacing:-0.13px;">-</div>
<div class="t" style="left:528px;top:210.8px;font-size:11px;letter-spacing:-0.13px;line-height:15px;color:#0000e0">Fils, Arthur (FRA)</div>
<svg class="a" style="left:808.5px;top:216.5px" width="5" height="8" viewBox="0 0 5 8"><path d="M2.5 0 V7 M0.4 4.6 L2.5 7.2 L4.6 4.6" fill="none" stroke="#222" stroke-width="0.9"/></svg>
<div class="t" style="left:800px;top:210.8px;font-size:11.0px;line-height:15px;color:#333;width:39px;text-align:right;letter-spacing:-0.13px;">2,19</div>
<svg class="a" style="left:857.0px;top:210.5px" width="5" height="8" viewBox="0 0 5 8"><path d="M2.5 8 V0.8 M0.4 3.4 L2.5 0.8 L4.6 3.4" fill="none" stroke="#222" stroke-width="0.9"/></svg>
<div class="t" style="left:864.5px;top:210.8px;font-size:11.0px;line-height:15px;color:#333;letter-spacing:-0.13px;">1,68</div>
<div class="t" style="left:960px;top:210.8px;font-size:11.0px;line-height:15px;color:#333;width:46.5px;text-align:right;letter-spacing:-0.13px;">95,07</div>
<div class="a" style="left:245px;top:226.5px;width:763.5px;height:18px;background:#fff"></div>
<svg class="a" style="left:248px;top:233.5px" width="8" height="5" viewBox="0 0 8 5"><path d="M0.8 0.8 L4 4 L7.2 0.8" fill="none" stroke="#1766c8" stroke-width="1.6"/></svg>
<div class="t" style="left:270px;top:228.8px;font-size:11.0px;line-height:15px;color:#333;width:43.5px;text-align:right;letter-spacing:-0.13px;">3.2.26</div>
<div class="t" style="left:318.5px;top:228.8px;font-size:11.0px;line-height:15px;color:#333;letter-spacing:-0.13px;">20:00</div>
<div class="t" style="left:371px;top:228.8px;width:141px;text-align:right;font-size:11px;letter-spacing:-0.13px;line-height:15px;color:#444">Vavassori, Andrea (ITA)</div>
<div class="t" style="left:518px;top:228.8px;font-size:11.0px;line-height:15px;color:#333;letter-spacing:-0.13px;">-</div>
<div class="t" style="left:528px;top:228.8px;font-size:11px;letter-spacing:-0.13px;line-height:15px;color:#0000e0">Blanchet, Ugo (FRA)</div>
<svg class="a" style="left:808.5px;top:234.5px" width="5" height="8" viewBox="0 0 5 8"><path d="M2.5 0 V7 M0.4 4.6 L2.5 7.2 L4.6 4.6" fill="none" stroke="#222" stroke-width="0.9"/></svg>
<div class="t" style="left:800px;top:228.8px;font-size:11.0px;line-height:15px;color:#333;width:39px;text-align:right;letter-spacing:-0.13px;">1,54</div>
<svg class="a" style="left:857.0px;top:228.5px" width="5" height="8" viewBox="0 0 5 8"><path d="M2.5 8 V0.8 M0.4 3.4 L2.5 0.8 L4.6 3.4" fill="none" stroke="#222" stroke-width="0.9"/></svg>
<div class="t" style="left:864.5px;top:228.8px;font-size:11.0px;line-height:15px;color:#333;letter-spacing:-0.13px;">2,46</div>
<div class="t" style="left:960px;top:228.8px;font-size:11.0px;line-height:15px;color:#333;width:46.5px;text-align:right;letter-spacing:-0.13px;">94,71</div>
<svg class="a" style="left:719.5px;top:227.5px" width="17" height="16" viewBox="0 0 17 16"><defs><radialGradient id="glb" cx="0.4" cy="0.35" r="0.7"><stop offset="0" stop-color="#e4f4ff"/><stop offset="0.6" stop-color="#7cbcf0"/><stop offset="1" stop-color="#3a7ac8"/></radialGradient></defs><circle cx="7" cy="6.6" r="6.3" fill="url(#glb)"/><path d="M2.2 2.6 C3.6 1 5.4 0.4 7 0.4 C6 1.6 4.6 2 4.2 3.4 C3.8 4.6 2.6 4.6 1.6 5.6 C1.2 7.4 1.8 9.6 3.2 11.2 C1.2 9.8 0.2 7 1 4.6 Z" fill="#5aa81c"/><path d="M8.4 0.6 C10.6 1 12.6 2.8 13.2 5.2 C12.4 4.6 11.6 5.4 10.8 5 C10 4.4 10.6 3.2 9.6 2.6 C8.8 2.2 8.2 1.6 8.4 0.6 Z" fill="#6cb828"/><path d="M7.6 6.4 C8.8 6 9.8 6.6 9.4 7.6 C9 8.4 7.8 8 7.6 6.4 Z" fill="#8cc840"/><ellipse cx="10.3" cy="11.7" rx="5.4" ry="3.3" fill="#fff" stroke="#2a3a9a" stroke-width="1.2"/><circle cx="10.3" cy="11.7" r="2.4" fill="#3a56b8"/><circle cx="10.3" cy="11.7" r="1.1" fill="#000"/></svg>
<div class="a" style="left:261px;top:268px;width:900px;height:1px;background:#c6c6c6"></div>
<div class="a" style="left:261px;top:268px;width:1px;height:268px;background:#c6c6c6"></div>
<div class="a" style="left:262px;top:269px;width:881px;height:266px;background:#f4f4f4"></div>
<div class="a" style="left:948px;top:269px;width:195px;height:266px;background:#fff"></div>
<div class="a" style="left:303px;top:250px;width:44px;height:18px;background:#e2e2e2;border:1px solid #bcbcbc;border-bottom:none"></div>
<div class="t" style="left:303px;top:252.8px;font-size:11.0px;line-height:15px;color:#444;width:44px;text-align:center;letter-spacing:-0.13px;">Domácí</div>
<div class="a" style="left:346px;top:250px;width:38px;height:18px;background:#e2e2e2;border:1px solid #bcbcbc;border-bottom:none"></div>
<div class="t" style="left:346px;top:252.8px;font-size:11.0px;line-height:15px;color:#444;width:38px;text-align:center;letter-spacing:-0.13px;">Hosté</div>
<div class="a" style="left:263px;top:247px;width:40px;height:22px;background:#f4f4f4;border:1px solid #c0c0c0;border-bottom:none"></div>
<div class="t" style="left:263px;top:251.8px;font-size:11.0px;line-height:15px;color:#333;width:40px;text-align:center;letter-spacing:-0.384px;">Kurzy</div>
<div class="a" style="left:1143px;top:269px;width:18px;height:266px;background:#f0f0f0"></div>
<div class="a" style="left:1143px;top:288px;width:18px;height:98px;background:#dcdcdc"></div>
<svg class="a" style="left:1147.5px;top:276px" width="7" height="5" viewBox="0 0 7 5"><path d="M0 5 H7 L3.5 0 Z" fill="#707070"/></svg>
<svg class="a" style="left:1147.5px;top:523.5px" width="7" height="5" viewBox="0 0 7 5"><path d="M0 0 H7 L3.5 5 Z" fill="#707070"/></svg>
<div class="a" style="left:1165px;top:376px;width:9px;height:2px;background:#2a9a4a"></div>
<div class="a" style="left:263px;top:270px;width:684.5px;height:30.5px;background:#f4f4f4"></div>
<svg class="a" style="left:265.5px;top:284.0px" width="8" height="5" viewBox="0 0 8 5"><path d="M0.8 0.8 L4 4 L7.2 0.8" fill="none" stroke="#1766c8" stroke-width="1.6"/></svg>
<div class="t" style="left:279.5px;top:279.3px;font-size:11.0px;line-height:15px;color:#1a66d0;letter-spacing:-0.13px;">Sázky : Základní</div>
<div class="a" style="left:277px;top:300px;width:670.5px;height:1px;background:#d6d6d6"></div>
<div class="a" style="left:277px;top:300px;width:1px;height:233px;background:#d6d6d6"></div>
<div class="a" style="left:947px;top:270px;width:1px;height:263px;background:#d6d6d6"></div>
<div class="a" style="left:278px;top:301px;width:669px;height:18.5px;background:#fff"></div>
<svg class="a" style="left:282px;top:308.25px" width="8" height="5" viewBox="0 0 8 5"><path d="M0.8 0.8 L4 4 L7.2 0.8" fill="none" stroke="#1766c8" stroke-width="1.6"/></svg>
<div class="t" style="left:296px;top:303.55px;font-size:11.9px;line-height:15px;color:#222;font-weight:bold;">Standard</div>
<div class="t" style="left:410.5px;top:303.55px;font-size:11.9px;line-height:15px;color:#222;font-weight:bold;">1</div>
<svg class="a" style="left:427.5px;top:309.25px" width="5" height="8" viewBox="0 0 5 8"><path d="M2.5 0 V7 M0.4 4.6 L2.5 7.2 L4.6 4.6" fill="none" stroke="#222" stroke-width="0.9"/></svg>
<div class="t" style="left:434.5px;top:303.55px;font-size:11.0px;line-height:15px;color:#333;letter-spacing:-0.13px;">1,54</div>
<div class="t" style="left:746.5px;top:303.55px;font-size:11.9px;line-height:15px;color:#222;font-weight:bold;">2</div>
<svg class="a" style="left:764.0px;top:303.25px" width="5" height="8" viewBox="0 0 5 8"><path d="M2.5 8 V0.8 M0.4 3.4 L2.5 0.8 L4.6 3.4" fill="none" stroke="#222" stroke-width="0.9"/></svg>
<div class="t" style="left:771.5px;top:303.55px;font-size:11.0px;line-height:15px;color:#333;letter-spacing:-0.13px;">2,46</div>
<div class="t" style="left:900px;top:303.55px;font-size:11.0px;line-height:15px;color:#333;width:45px;text-align:right;letter-spacing:-0.13px;">94,71</div>
<div class="a" style="left:294px;top:319px;width:653px;height:1px;background:#c6c6c6"></div>
<div class="a" style="left:294px;top:319px;width:1px;height:193px;background:#c6c6c6"></div>
<div class="a" style="left:278px;top:320px;width:865px;height:192px;background:#fff"></div>
<div class="a" style="left:294px;top:343px;width:849px;height:1px;background:#c0c0c0"></div>
<div class="a" style="left:298px;top:323px;width:57px;height:20px;background:#e2e2e2;border:1px solid #bcbcbc;border-bottom:none"></div>
<div class="t" style="left:298px;top:326.1px;font-size:11.0px;line-height:15px;color:#444;width:57px;text-align:center;letter-spacing:-0.13px;">Kanceláře</div>
<div class="a" style="left:390px;top:323px;width:56px;height:20px;background:#e2e2e2;border:1px solid #bcbcbc;border-bottom:none"></div>
<div class="t" style="left:390px;top:326.1px;font-size:11.0px;line-height:15px;color:#444;width:56px;text-align:center;letter-spacing:-0.13px;">Vzájemné</div>
<div class="a" style="left:445px;top:323px;width:45.5px;height:20px;background:#e2e2e2;border:1px solid #bcbcbc;border-bottom:none"></div>
<div class="t" style="left:445px;top:326.1px;font-size:11.0px;line-height:15px;color:#444;width:45.5px;text-align:center;letter-spacing:-0.13px;">Domácí</div>
<div class="a" style="left:489.5px;top:323px;width:38.5px;height:20px;background:#e2e2e2;border:1px solid #bcbcbc;border-bottom:none"></div>
<div class="t" style="left:489.5px;top:326.1px;font-size:11.0px;line-height:15px;color:#444;width:38.5px;text-align:center;letter-spacing:-0.13px;">Hosté</div>
<div class="a" style="left:527px;top:323px;width:55px;height:20px;background:#e2e2e2;border:1px solid #bcbcbc;border-bottom:none"></div>
<div class="t" style="left:527px;top:326.1px;font-size:11.0px;line-height:15px;color:#444;width:55px;text-align:center;letter-spacing:-0.13px;">1) Kurz 1</div>
<div class="a" style="left:581px;top:323px;width:53.5px;height:20px;background:#e2e2e2;border:1px solid #bcbcbc;border-bottom:none"></div>
<div class="t" style="left:581px;top:326.1px;font-size:11.0px;line-height:15px;color:#444;width:53.5px;text-align:center;letter-spacing:-0.13px;">2) Kurz 1</div>
<div class="a" style="left:633.5px;top:323px;width:54.0px;height:20px;background:#e2e2e2;border:1px solid #bcbcbc;border-bottom:none"></div>
<div class="t" style="left:633.5px;top:326.1px;font-size:11.0px;line-height:15px;color:#444;width:54.0px;text-align:center;letter-spacing:-0.13px;">1) Kurz 0</div>
<div class="a" style="left:686.5px;top:323px;width:54.0px;height:20px;background:#e2e2e2;border:1px solid #bcbcbc;border-bottom:none"></div>
<div class="t" style="left:686.5px;top:326.1px;font-size:11.0px;line-height:15px;color:#444;width:54.0px;text-align:center;letter-spacing:-0.13px;">2) Kurz 0</div>
<div class="a" style="left:739.5px;top:323px;width:54.0px;height:20px;background:#e2e2e2;border:1px solid #bcbcbc;border-bottom:none"></div>
<div class="t" style="left:739.5px;top:326.1px;font-size:11.0px;line-height:15px;color:#444;width:54.0px;text-align:center;letter-spacing:-0.13px;">1) Kurz 2</div>
<div class="a" style="left:792.5px;top:323px;width:54.5px;height:20px;background:#e2e2e2;border:1px solid #bcbcbc;border-bottom:none"></div>
<div class="t" style="left:792.5px;top:326.1px;font-size:11.0px;line-height:15px;color:#444;width:54.5px;text-align:center;letter-spacing:-0.13px;">2) Kurz 2</div>
<div class="a" style="left:846px;top:323px;width:57px;height:20px;background:#e2e2e2;border:1px solid #bcbcbc;border-bottom:none"></div>
<div class="t" style="left:846px;top:326.1px;font-size:11.0px;line-height:15px;color:#444;width:57px;text-align:center;letter-spacing:-0.13px;">1) Soutěž</div>
<div class="a" style="left:902px;top:323px;width:56px;height:20px;background:#e2e2e2;border:1px solid #bcbcbc;border-bottom:none"></div>
<div class="t" style="left:902px;top:326.1px;font-size:11.0px;line-height:15px;color:#444;width:56px;text-align:center;letter-spacing:-0.13px;">2) Soutěž</div>
<div class="a" style="left:353.5px;top:321px;width:37px;height:23px;background:#fff;border:1px solid #bcbcbc;border-bottom:none"></div>
<div class="t" style="left:353.5px;top:325.8px;font-size:11.0px;line-height:15px;color:#333;width:37px;text-align:center;letter-spacing:-0.13px;">Stats</div>
<div class="a" style="left:294px;top:345px;width:848px;height:167px;background:#fff;border:1px solid #c6c6c6"></div>
<div class="a" style="left:295px;top:346px;width:846px;height:76px;background:#f4f4f4"></div>
<div class="a" style="left:448px;top:371px;width:693px;height:1px;background:#d6d6d6"></div>
<div class="a" style="left:295px;top:396px;width:846px;height:1px;background:#d6d6d6"></div>
<div class="a" style="left:295px;top:421.5px;width:846px;height:1px;background:#d6d6d6"></div>
<div class="a" style="left:307px;top:346px;width:1px;height:148px;background:#d6d6d6"></div>
<div class="a" style="left:447.5px;top:346px;width:1px;height:76px;background:#d6d6d6"></div>
<div class="a" style="left:482.5px;top:396px;width:1px;height:26px;background:#d6d6d6"></div>
<div class="a" style="left:522.5px;top:396px;width:1px;height:26px;background:#d6d6d6"></div>
<div class="t" style="left:448px;top:401.3px;font-size:11.0px;line-height:15px;color:#444;width:35px;text-align:center;letter-spacing:-0.13px;">C</div>
<div class="t" style="left:483px;top:401.3px;font-size:11.0px;line-height:15px;color:#444;width:40px;text-align:center;letter-spacing:-0.13px;">-1S</div>
<div class="t" style="left:523px;top:401.3px;font-size:11.0px;line-height:15px;color:#444;width:40.5px;text-align:center;letter-spacing:-0.13px;">+:0</div>
<div class="t" style="left:448px;top:375.7px;font-size:11.0px;line-height:15px;color:#444;width:115.5px;text-align:center;letter-spacing:-0.13px;">celkem</div>
<div class="a" style="left:563.0px;top:371px;width:1px;height:51px;background:#d6d6d6"></div>
<div class="a" style="left:598.0px;top:396px;width:1px;height:26px;background:#d6d6d6"></div>
<div class="a" style="left:638.0px;top:396px;width:1px;height:26px;background:#d6d6d6"></div>
<div class="t" style="left:563.5px;top:401.3px;font-size:11.0px;line-height:15px;color:#444;width:35px;text-align:center;letter-spacing:-0.13px;">C</div>
<div class="t" style="left:598.5px;top:401.3px;font-size:11.0px;line-height:15px;color:#444;width:40px;text-align:center;letter-spacing:-0.13px;">-1S</div>
<div class="t" style="left:638.5px;top:401.3px;font-size:11.0px;line-height:15px;color:#444;width:40.5px;text-align:center;letter-spacing:-0.13px;">+:0</div>
<div class="t" style="left:563.5px;top:375.7px;font-size:11.0px;line-height:15px;color:#444;width:115.5px;text-align:center;letter-spacing:-0.13px;">povrch</div>
<div class="a" style="left:678.5px;top:346px;width:1px;height:76px;background:#d6d6d6"></div>
<div class="a" style="left:713.5px;top:396px;width:1px;height:26px;background:#d6d6d6"></div>
<div class="a" style="left:753.5px;top:396px;width:1px;height:26px;background:#d6d6d6"></div>
<div class="t" style="left:679px;top:401.3px;font-size:11.0px;line-height:15px;color:#444;width:35px;text-align:center;letter-spacing:-0.13px;">C</div>
<div class="t" style="left:714px;top:401.3px;font-size:11.0px;line-height:15px;color:#444;width:40px;text-align:center;letter-spacing:-0.13px;">-1S</div>
<div class="t" style="left:754px;top:401.3px;font-size:11.0px;line-height:15px;color:#444;width:40.5px;text-align:center;letter-spacing:-0.13px;">+:0</div>
<div class="t" style="left:679px;top:375.7px;font-size:11.0px;line-height:15px;color:#444;width:115.5px;text-align:center;letter-spacing:-0.13px;">celkem</div>
<div class="a" style="left:794.0px;top:371px;width:1px;height:51px;background:#d6d6d6"></div>
<div class="a" style="left:829.0px;top:396px;width:1px;height:26px;background:#d6d6d6"></div>
<div class="a" style="left:869.0px;top:396px;width:1px;height:26px;background:#d6d6d6"></div>
<div class="t" style="left:794.5px;top:401.3px;font-size:11.0px;line-height:15px;color:#444;width:35px;text-align:center;letter-spacing:-0.13px;">C</div>
<div class="t" style="left:829.5px;top:401.3px;font-size:11.0px;line-height:15px;color:#444;width:40px;text-align:center;letter-spacing:-0.13px;">-1S</div>
<div class="t" style="left:869.5px;top:401.3px;font-size:11.0px;line-height:15px;color:#444;width:40.5px;text-align:center;letter-spacing:-0.13px;">+:0</div>
<div class="t" style="left:794.5px;top:375.7px;font-size:11.0px;line-height:15px;color:#444;width:115.5px;text-align:center;letter-spacing:-0.13px;">povrch</div>
<div class="a" style="left:909.5px;top:346px;width:1px;height:76px;background:#d6d6d6"></div>
<div class="a" style="left:944.5px;top:396px;width:1px;height:26px;background:#d6d6d6"></div>
<div class="a" style="left:984.5px;top:396px;width:1px;height:26px;background:#d6d6d6"></div>
<div class="t" style="left:910px;top:401.3px;font-size:11.0px;line-height:15px;color:#444;width:35px;text-align:center;letter-spacing:-0.13px;">C</div>
<div class="t" style="left:945px;top:401.3px;font-size:11.0px;line-height:15px;color:#444;width:40px;text-align:center;letter-spacing:-0.13px;">-1S</div>
<div class="t" style="left:985px;top:401.3px;font-size:11.0px;line-height:15px;color:#444;width:40.5px;text-align:center;letter-spacing:-0.13px;">+:0</div>
<div class="t" style="left:910px;top:375.7px;font-size:11.0px;line-height:15px;color:#444;width:115.5px;text-align:center;letter-spacing:-0.13px;">celkem</div>
<div class="a" style="left:1025.0px;top:371px;width:1px;height:51px;background:#d6d6d6"></div>
<div class="a" style="left:1060.0px;top:396px;width:1px;height:26px;background:#d6d6d6"></div>
<div class="a" style="left:1100.0px;top:396px;width:1px;height:26px;background:#d6d6d6"></div>
<div class="t" style="left:1025.5px;top:401.3px;font-size:11.0px;line-height:15px;color:#444;width:35px;text-align:center;letter-spacing:-0.13px;">C</div>
<div class="t" style="left:1060.5px;top:401.3px;font-size:11.0px;line-height:15px;color:#444;width:40px;text-align:center;letter-spacing:-0.13px;">-1S</div>
<div class="t" style="left:1100.5px;top:401.3px;font-size:11.0px;line-height:15px;color:#444;width:40.5px;text-align:center;letter-spacing:-0.13px;">+:0</div>
<div class="t" style="left:1025.5px;top:375.7px;font-size:11.0px;line-height:15px;color:#444;width:115.5px;text-align:center;letter-spacing:-0.13px;">povrch</div>
<div class="t" style="left:448px;top:350.5px;font-size:11.0px;line-height:15px;color:#444;width:231px;text-align:center;letter-spacing:-0.13px;">Fav / Out (-365)</div>
<div class="t" style="left:679px;top:350.5px;font-size:11.0px;line-height:15px;color:#444;width:231px;text-align:center;letter-spacing:-0.13px;">Vyrovnané (-365)</div>
<div class="t" style="left:910px;top:350.5px;font-size:11.0px;line-height:15px;color:#444;width:231px;text-align:center;letter-spacing:-0.13px;">Out / Fav (-365)</div>
<div class="t" style="left:311.5px;top:401.3px;font-size:11.0px;line-height:15px;color:#444;letter-spacing:-0.13px;">kdo</div>
<div class="t" style="left:394px;top:401.3px;font-size:11.0px;line-height:15px;color:#444;letter-spacing:-0.13px;">tip</div>
<div class="a" style="left:387px;top:396px;width:1px;height:26px;background:#d6d6d6"></div>
<svg class="a" style="left:297px;top:367px" width="8" height="8" viewBox="0 0 8 8"><path d="M4 0 V8 M0 4 H8 M1.2 1.2 L6.8 6.8 M6.8 1.2 L1.2 6.8" stroke="#1c6ad0" stroke-width="1.3"/></svg>
<svg class="a" style="left:297px;top:405px" width="8" height="8" viewBox="0 0 8 8"><path d="M4 0 V8 M0 4 H8 M1.2 1.2 L6.8 6.8 M6.8 1.2 L1.2 6.8" stroke="#1c6ad0" stroke-width="1.3"/></svg>
<div class="a" style="left:308px;top:422px;width:833px;height:18px;background:#1c6ad0"></div>
<div class="a" style="left:309px;top:422px;width:78.5px;height:18px;"><div class="t" style="left:0.5px;top:2.3px;font-size:10.7px;letter-spacing:0.13px;line-height:15px;color:#fff">Vavassori, Andr</div></div>
<div class="t" style="left:389.5px;top:424.3px;font-size:11.0px;line-height:15px;color:#fff;letter-spacing:-0.13px;">Výhra</div>
<div class="t" style="left:448px;top:424.3px;font-size:11.0px;line-height:15px;color:#fff;width:35px;text-align:center;letter-spacing:-0.13px;">0</div>
<div class="t" style="left:483px;top:424.3px;font-size:11.0px;line-height:15px;color:#fff;width:38.5px;text-align:right;letter-spacing:-0.13px;">0%</div>
<div class="t" style="left:523px;top:424.3px;font-size:11.0px;line-height:15px;color:#fff;width:38.5px;text-align:right;letter-spacing:-0.13px;">0%</div>
<div class="t" style="left:563.5px;top:424.3px;font-size:11.0px;line-height:15px;color:#fff;width:35px;text-align:center;letter-spacing:-0.13px;">0</div>
<div class="t" style="left:598.5px;top:424.3px;font-size:11.0px;line-height:15px;color:#fff;width:38.5px;text-align:right;letter-spacing:-0.13px;">0%</div>
<div class="t" style="left:638.5px;top:424.3px;font-size:11.0px;line-height:15px;color:#fff;width:38.5px;text-align:right;letter-spacing:-0.13px;">0%</div>
<div class="t" style="left:679px;top:424.3px;font-size:11.0px;line-height:15px;color:#fff;width:35px;text-align:center;letter-spacing:-0.13px;">9</div>
<div class="t" style="left:714px;top:424.3px;font-size:11.0px;line-height:15px;color:#fff;width:38.5px;text-align:right;letter-spacing:-0.13px;">11%</div>
<div class="t" style="left:754px;top:424.3px;font-size:11.0px;line-height:15px;color:#fff;width:38.5px;text-align:right;letter-spacing:-0.13px;">67%</div>
<div class="t" style="left:794.5px;top:424.3px;font-size:11.0px;line-height:15px;color:#fff;width:35px;text-align:center;letter-spacing:-0.13px;">9</div>
<div class="t" style="left:829.5px;top:424.3px;font-size:11.0px;line-height:15px;color:#fff;width:38.5px;text-align:right;letter-spacing:-0.13px;">11%</div>
<div class="t" style="left:869.5px;top:424.3px;font-size:11.0px;line-height:15px;color:#fff;width:38.5px;text-align:right;letter-spacing:-0.13px;">67%</div>
<div class="a" style="left:308px;top:440px;width:833px;height:18px;background:#fff"></div>
<div class="a" style="left:309px;top:440px;width:78.5px;height:18px;"><div class="t" style="left:0.5px;top:2.3px;font-size:10.7px;letter-spacing:0.13px;line-height:15px;color:#333">Vavassori, Andr</div></div>
<div class="t" style="left:389.5px;top:442.3px;font-size:11.0px;line-height:15px;color:#333;letter-spacing:-0.13px;">Prohra</div>
<div class="t" style="left:448px;top:442.3px;font-size:11.0px;line-height:15px;color:#333;width:35px;text-align:center;letter-spacing:-0.13px;">3</div>
<div class="t" style="left:483px;top:442.3px;font-size:11.0px;line-height:15px;color:#333;width:38.5px;text-align:right;letter-spacing:-0.13px;">100%</div>
<div class="t" style="left:523px;top:442.3px;font-size:11.0px;line-height:15px;color:#333;width:38.5px;text-align:right;letter-spacing:-0.13px;">0%</div>
<div class="t" style="left:563.5px;top:442.3px;font-size:11.0px;line-height:15px;color:#333;width:35px;text-align:center;letter-spacing:-0.13px;">3</div>
<div class="t" style="left:598.5px;top:442.3px;font-size:11.0px;line-height:15px;color:#333;width:38.5px;text-align:right;letter-spacing:-0.13px;">100%</div>
<div class="t" style="left:638.5px;top:442.3px;font-size:11.0px;line-height:15px;color:#333;width:38.5px;text-align:right;letter-spacing:-0.13px;">0%</div>
<div class="t" style="left:679px;top:442.3px;font-size:11.0px;line-height:15px;color:#333;width:35px;text-align:center;letter-spacing:-0.13px;">3</div>
<div class="t" style="left:714px;top:442.3px;font-size:11.0px;line-height:15px;color:#333;width:38.5px;text-align:right;letter-spacing:-0.13px;">67%</div>
<div class="t" style="left:754px;top:442.3px;font-size:11.0px;line-height:15px;color:#333;width:38.5px;text-align:right;letter-spacing:-0.13px;">0%</div>
<div class="t" style="left:794.5px;top:442.3px;font-size:11.0px;line-height:15px;color:#333;width:35px;text-align:center;letter-spacing:-0.13px;">2</div>
<div class="t" style="left:829.5px;top:442.3px;font-size:11.0px;line-height:15px;color:#333;width:38.5px;text-align:right;letter-spacing:-0.13px;">100%</div>
<div class="t" style="left:869.5px;top:442.3px;font-size:11.0px;line-height:15px;color:#333;width:38.5px;text-align:right;letter-spacing:-0.13px;">0%</div>
<div class="a" style="left:447.5px;top:440px;width:1px;height:18px;background:#d6d6d6"></div>
<div class="a" style="left:563.0px;top:440px;width:1px;height:18px;background:#d6d6d6"></div>
<div class="a" style="left:678.5px;top:440px;width:1px;height:18px;background:#d6d6d6"></div>
<div class="a" style="left:794.0px;top:440px;width:1px;height:18px;background:#d6d6d6"></div>
<div class="a" style="left:909.5px;top:440px;width:1px;height:18px;background:#d6d6d6"></div>
<div class="a" style="left:1025.0px;top:440px;width:1px;height:18px;background:#d6d6d6"></div>
<div class="a" style="left:1140.5px;top:440px;width:1px;height:18px;background:#d6d6d6"></div>
<div class="a" style="left:308px;top:458px;width:833px;height:18px;background:#f4f4f4"></div>
<div class="a" style="left:309px;top:458px;width:78.5px;height:18px;"><div class="t" style="left:0.5px;top:2.3px;font-size:10.7px;letter-spacing:0.13px;line-height:15px;color:#333">Blanchet, Ugo (F</div></div>
<div class="t" style="left:389.5px;top:460.3px;font-size:11.0px;line-height:15px;color:#333;letter-spacing:-0.13px;">Výhra</div>
<div class="t" style="left:679px;top:460.3px;font-size:11.0px;line-height:15px;color:#333;width:35px;text-align:center;letter-spacing:-0.13px;">21</div>
<div class="t" style="left:714px;top:460.3px;font-size:11.0px;line-height:15px;color:#333;width:38.5px;text-align:right;letter-spacing:-0.13px;">19%</div>
<div class="t" style="left:754px;top:460.3px;font-size:11.0px;line-height:15px;color:#333;width:38.5px;text-align:right;letter-spacing:-0.13px;">71%</div>
<div class="t" style="left:794.5px;top:460.3px;font-size:11.0px;line-height:15px;color:#333;width:35px;text-align:center;letter-spacing:-0.13px;">15</div>
<div class="t" style="left:829.5px;top:460.3px;font-size:11.0px;line-height:15px;color:#333;width:38.5px;text-align:right;letter-spacing:-0.13px;">20%</div>
<div class="t" style="left:869.5px;top:460.3px;font-size:11.0px;line-height:15px;color:#333;width:38.5px;text-align:right;letter-spacing:-0.13px;">67%</div>
<div class="t" style="left:910px;top:460.3px;font-size:11.0px;line-height:15px;color:#333;width:35px;text-align:center;letter-spacing:-0.13px;">6</div>
<div class="t" style="left:945px;top:460.3px;font-size:11.0px;line-height:15px;color:#333;width:38.5px;text-align:right;letter-spacing:-0.13px;">0%</div>
<div class="t" style="left:985px;top:460.3px;font-size:11.0px;line-height:15px;color:#333;width:38.5px;text-align:right;letter-spacing:-0.13px;">83%</div>
<div class="t" style="left:1025.5px;top:460.3px;font-size:11.0px;line-height:15px;color:#333;width:35px;text-align:center;letter-spacing:-0.13px;">4</div>
<div class="t" style="left:1060.5px;top:460.3px;font-size:11.0px;line-height:15px;color:#333;width:38.5px;text-align:right;letter-spacing:-0.13px;">0%</div>
<div class="t" style="left:1100.5px;top:460.3px;font-size:11.0px;line-height:15px;color:#333;width:38.5px;text-align:right;letter-spacing:-0.13px;">75%</div>
<div class="a" style="left:447.5px;top:458px;width:1px;height:18px;background:#d6d6d6"></div>
<div class="a" style="left:563.0px;top:458px;width:1px;height:18px;background:#d6d6d6"></div>
<div class="a" style="left:678.5px;top:458px;width:1px;height:18px;background:#d6d6d6"></div>
<div class="a" style="left:794.0px;top:458px;width:1px;height:18px;background:#d6d6d6"></div>
<div class="a" style="left:909.5px;top:458px;width:1px;height:18px;background:#d6d6d6"></div>
<div class="a" style="left:1025.0px;top:458px;width:1px;height:18px;background:#d6d6d6"></div>
<div class="a" style="left:1140.5px;top:458px;width:1px;height:18px;background:#d6d6d6"></div>
<div class="a" style="left:308px;top:476px;width:833px;height:18px;background:#fff"></div>
<div class="a" style="left:309px;top:476px;width:78.5px;height:18px;"><div class="t" style="left:0.5px;top:2.3px;font-size:10.7px;letter-spacing:0.13px;line-height:15px;color:#333">Blanchet, Ugo (F</div></div>
<div class="t" style="left:389.5px;top:478.3px;font-size:11.0px;line-height:15px;color:#333;letter-spacing:-0.13px;">Prohra</div>
<div class="t" style="left:679px;top:478.3px;font-size:11.0px;line-height:15px;color:#333;width:35px;text-align:center;letter-spacing:-0.13px;">15</div>
<div class="t" style="left:714px;top:478.3px;font-size:11.0px;line-height:15px;color:#333;width:38.5px;text-align:right;letter-spacing:-0.13px;">80%</div>
<div class="t" style="left:754px;top:478.3px;font-size:11.0px;line-height:15px;color:#333;width:38.5px;text-align:right;letter-spacing:-0.13px;">0%</div>
<div class="t" style="left:794.5px;top:478.3px;font-size:11.0px;line-height:15px;color:#333;width:35px;text-align:center;letter-spacing:-0.13px;">10</div>
<div class="t" style="left:829.5px;top:478.3px;font-size:11.0px;line-height:15px;color:#333;width:38.5px;text-align:right;letter-spacing:-0.13px;">80%</div>
<div class="t" style="left:869.5px;top:478.3px;font-size:11.0px;line-height:15px;color:#333;width:38.5px;text-align:right;letter-spacing:-0.13px;">0%</div>
<div class="t" style="left:910px;top:478.3px;font-size:11.0px;line-height:15px;color:#333;width:35px;text-align:center;letter-spacing:-0.13px;">13</div>
<div class="t" style="left:945px;top:478.3px;font-size:11.0px;line-height:15px;color:#333;width:38.5px;text-align:right;letter-spacing:-0.13px;">77%</div>
<div class="t" style="left:985px;top:478.3px;font-size:11.0px;line-height:15px;color:#333;width:38.5px;text-align:right;letter-spacing:-0.13px;">0%</div>
<div class="t" style="left:1025.5px;top:478.3px;font-size:11.0px;line-height:15px;color:#333;width:35px;text-align:center;letter-spacing:-0.13px;">5</div>
<div class="t" style="left:1060.5px;top:478.3px;font-size:11.0px;line-height:15px;color:#333;width:38.5px;text-align:right;letter-spacing:-0.13px;">80%</div>
<div class="t" style="left:1100.5px;top:478.3px;font-size:11.0px;line-height:15px;color:#333;width:38.5px;text-align:right;letter-spacing:-0.13px;">0%</div>
<div class="a" style="left:447.5px;top:476px;width:1px;height:18px;background:#d6d6d6"></div>
<div class="a" style="left:563.0px;top:476px;width:1px;height:18px;background:#d6d6d6"></div>
<div class="a" style="left:678.5px;top:476px;width:1px;height:18px;background:#d6d6d6"></div>
<div class="a" style="left:794.0px;top:476px;width:1px;height:18px;background:#d6d6d6"></div>
<div class="a" style="left:909.5px;top:476px;width:1px;height:18px;background:#d6d6d6"></div>
<div class="a" style="left:1025.0px;top:476px;width:1px;height:18px;background:#d6d6d6"></div>
<div class="a" style="left:1140.5px;top:476px;width:1px;height:18px;background:#d6d6d6"></div>
<div class="a" style="left:295px;top:457px;width:846px;height:1px;background:#cdcdcd"></div>
<div class="a" style="left:295px;top:475px;width:846px;height:1px;background:#cdcdcd"></div>
<div class="a" style="left:295px;top:493px;width:846px;height:1px;background:#cdcdcd"></div>
<div class="a" style="left:295px;top:439px;width:13px;height:1px;background:#cdcdcd"></div>
<div class="a" style="left:562.5px;top:422px;width:2px;height:72px;background:#000"></div>
<div class="a" style="left:678px;top:422px;width:2px;height:72px;background:#000"></div>
<div class="a" style="left:793.5px;top:422px;width:2px;height:72px;background:#000"></div>
<div class="a" style="left:909px;top:422px;width:2px;height:72px;background:#000"></div>
<div class="a" style="left:1024.5px;top:422px;width:2px;height:72px;background:#000"></div>
<div class="a" style="left:447px;top:346px;width:1.6px;height:148px;background:#cfcfcf"></div>
<div class="a" style="left:308px;top:422px;width:833px;height:17px;border-top:1px dotted #e0b070;border-bottom:1px dotted #e0b070;background:transparent"></div>
<svg class="a" style="left:296px;top:427.5px" width="10" height="7" viewBox="0 0 10 7"><path d="M0.5 3.5 H8.5 M5.5 0.8 L8.5 3.5 L5.5 6.2" fill="none" stroke="#1766c8" stroke-width="1"/></svg>
<div class="a" style="left:295px;top:494px;width:846px;height:17px;background:#f0f0f0"></div>
<div class="a" style="left:681px;top:494px;width:444px;height:17px;background:#c2dcf8"></div>
<svg class="a" style="left:301px;top:499px" width="5" height="7" viewBox="0 0 5 7"><path d="M5 0 V7 L0 3.5 Z" fill="#6a6a6a"/></svg>
<svg class="a" style="left:1130px;top:499px" width="5" height="7" viewBox="0 0 5 7"><path d="M0 0 V7 L5 3.5 Z" fill="#6a6a6a"/></svg>
<div class="a" style="left:278px;top:512px;width:669px;height:1px;background:#dcdcdc"></div>
<div class="a" style="left:278px;top:513px;width:669px;height:18px;background:#f4f4f4"></div>
<svg class="a" style="left:284px;top:518.0px" width="5" height="8" viewBox="0 0 5 8"><path d="M0.8 0.8 L4 4 L0.8 7.2" fill="none" stroke="#1766c8" stroke-width="1.6"/></svg>
<div class="t" style="left:296px;top:515.3px;font-size:11.9px;line-height:15px;color:#222;font-weight:bold;">1.set</div>
<div class="t" style="left:410.5px;top:515.3px;font-size:11.9px;line-height:15px;color:#222;font-weight:bold;">1</div>
<svg class="a" style="left:427.5px;top:521.0px" width="5" height="8" viewBox="0 0 5 8"><path d="M2.5 0 V7 M0.4 4.6 L2.5 7.2 L4.6 4.6" fill="none" stroke="#222" stroke-width="0.9"/></svg>
<div class="t" style="left:434.5px;top:515.3px;font-size:11.0px;line-height:15px;color:#333;letter-spacing:-0.13px;">1,58</div>
<div class="t" style="left:746.5px;top:515.3px;font-size:11.9px;line-height:15px;color:#222;font-weight:bold;">2</div>
<svg class="a" style="left:764.0px;top:515.0px" width="5" height="8" viewBox="0 0 5 8"><path d="M2.5 8 V0.8 M0.4 3.4 L2.5 0.8 L4.6 3.4" fill="none" stroke="#222" stroke-width="0.9"/></svg>
<div class="t" style="left:771.5px;top:515.3px;font-size:11.0px;line-height:15px;color:#333;letter-spacing:-0.13px;">2,23</div>
<div class="t" style="left:900px;top:515.3px;font-size:11.0px;line-height:15px;color:#333;width:45px;text-align:right;letter-spacing:-0.13px;">92,48</div>
<div class="a" style="left:277px;top:531px;width:670.5px;height:1px;background:#d6d6d6"></div>
<div class="a" style="left:262px;top:535px;width:899px;height:1px;background:#c6c6c6"></div>
<div class="a" style="left:245px;top:535.5px;width:916px;height:1px;background:#c6c6c6"></div>
<div class="a" style="left:1008px;top:536px;width:1px;height:30px;background:#d6d6d6"></div>
<div class="a" style="left:245px;top:566px;width:934px;height:18px;background:#fff"></div>
<div class="a" style="left:248px;top:540px;width:66px;height:23px;background:#fff;border:1px solid #d4d4d4"></div>
<div class="t" style="left:250px;top:544.8px;font-size:11.0px;line-height:15px;color:#333;width:59px;text-align:right;letter-spacing:-0.13px;">16</div>
<div class="a" style="left:317px;top:540px;width:190px;height:23px;background:#fff;border:1px solid #d4d4d4"></div>
<div class="a" style="left:527px;top:540px;width:140px;height:23px;background:#fff;border:1px solid #d4d4d4"></div>
<div class="t" style="left:527px;top:544.8px;font-size:11.0px;line-height:15px;color:#333;width:140px;text-align:center;letter-spacing:0.395px;">fav.: 4 / out.: 3</div>
<svg class="a" style="left:249px;top:571px" width="10" height="8" viewBox="0 0 10 8"><path d="M0.5 0.5 V7.5" stroke="#333" stroke-width="1"/><path d="M5.2 0.5 V7.5 L1.6 4 Z M9.4 0.5 V7.5 L5.8 4 Z" fill="#333"/></svg>
<svg class="a" style="left:265px;top:571px" width="9" height="8" viewBox="0 0 9 8"><path d="M4.2 0.5 V7.5 L0.4 4 Z M8.6 0.5 V7.5 L4.8 4 Z" fill="#333"/></svg>
<svg class="a" style="left:284px;top:571px" width="5" height="8" viewBox="0 0 5 8"><path d="M4.4 0.5 V7.5 L0.6 4 Z" fill="#333"/></svg>
<div class="t" style="left:301.5px;top:568.3px;font-size:11.0px;line-height:15px;color:#333;letter-spacing:-0.13px;">9 / 16</div>
<svg class="a" style="left:342px;top:571px" width="5" height="8" viewBox="0 0 5 8"><path d="M0.6 0.5 V7.5 L4.4 4 Z" fill="#333"/></svg>
<svg class="a" style="left:357px;top:571px" width="9" height="8" viewBox="0 0 9 8"><path d="M0.4 0.5 V7.5 L4.2 4 Z M4.8 0.5 V7.5 L8.6 4 Z" fill="#333"/></svg>
<svg class="a" style="left:373px;top:571px" width="10" height="8" viewBox="0 0 10 8"><path d="M0.6 0.5 V7.5 L4.2 4 Z M4.8 0.5 V7.5 L8.4 4 Z" fill="#333"/><path d="M9.5 0.5 V7.5" stroke="#333" stroke-width="1"/></svg>
<svg class="a" style="left:390px;top:570px" width="11" height="10" viewBox="0 0 11 10"><path d="M1.5 9 V6 Q1.5 3.5 4 3.5 H8" fill="none" stroke="#333" stroke-width="1.8"/><path d="M7 0.5 L10.8 3.5 L7 6.5 Z" fill="#333"/></svg>
<svg class="a" style="left:408px;top:571px" width="8" height="8" viewBox="0 0 8 8"><path d="M4 0 V8 M0 4 H8 M1.2 1.2 L6.8 6.8 M6.8 1.2 L1.2 6.8" stroke="#333" stroke-width="1.5"/></svg>
<svg class="a" style="left:423px;top:570px" width="10" height="10" viewBox="0 0 10 10"><path d="M5 0 V10 M0 5 H10 M1.5 1.5 L8.5 8.5 M8.5 1.5 L1.5 8.5" stroke="#8a8a8a" stroke-width="1"/></svg>
<svg class="a" style="left:442px;top:571px" width="9" height="9" viewBox="0 0 9 9"><path d="M0 0 H9 L5.5 4 V9 L3.5 7.5 V4 Z" fill="#333"/></svg>
<svg class="a" style="left:455px;top:567px" width="17" height="17" viewBox="0 0 17 17"><circle cx="6.5" cy="6.5" r="5" fill="#a8d0f8" stroke="#3a6ab8" stroke-width="1.6"/><path d="M10.5 10.5 L15.5 15.5" stroke="#d88828" stroke-width="2.6" stroke-linecap="round"/></svg>
<svg class="a" style="left:472.5px;top:567.5px" width="15.0" height="15.0" viewBox="0 0 16 16"><circle cx="8" cy="8" r="7.4" fill="#5a9ae8" stroke="#2a62b8"/><circle cx="8" cy="6.5" r="5.4" fill="#8cc0f8" opacity="0.7"/><path d="M8 3.8 V12.2 M3.8 8 H12.2" stroke="#2a52a0" stroke-width="3.6" stroke-linecap="round"/><path d="M8 4.2 V11.8 M4.2 8 H11.8" stroke="#fff" stroke-width="2" stroke-linecap="round"/></svg>
<svg class="a" style="left:489.5px;top:568px" width="15" height="15" viewBox="0 0 15 15"><rect x="0.5" y="0.5" width="14" height="14" fill="#fff" stroke="#6a78b8"/><path d="M7.5 2 V13 M2 7.5 H13" stroke="#2a3a6a" stroke-width="1" stroke-dasharray="1.2 0.8"/><path d="M7.5 1.5 L5.8 3.8 H9.2 Z M7.5 13.5 L5.8 11.2 H9.2 Z M1.5 7.5 L3.8 5.8 V9.2 Z M13.5 7.5 L11.2 5.8 V9.2 Z" fill="#2a3a6a"/></svg>
<svg class="a" style="left:506.5px;top:568px" width="14" height="14" viewBox="0 0 14 14"><circle cx="7" cy="7" r="4.4" fill="#e4e9f2" stroke="#6a7898" stroke-width="1"/><circle cx="7" cy="7" r="1.8" fill="#fff" stroke="#6a7898" stroke-width="0.8"/><g stroke="#6a7898" stroke-width="2"><path d="M7 0.5 V2.6 M7 11.4 V13.5 M0.5 7 H2.6 M11.4 7 H13.5 M2.4 2.4 L3.9 3.9 M10.1 10.1 L11.6 11.6 M2.4 11.6 L3.9 10.1 M10.1 3.9 L11.6 2.4"/></g></svg>
<svg class="a" style="left:524px;top:567px" width="14" height="16" viewBox="0 0 14 16"><rect x="0.5" y="1.5" width="13" height="14" rx="1" fill="#e8a030" stroke="#a06010"/><rect x="2.5" y="3.5" width="9" height="10.5" fill="#fff"/><rect x="4" y="0.3" width="6" height="3" rx="1" fill="#888" stroke="#555" stroke-width="0.6"/><path d="M4 6.5 L5 7.5 L6.5 5.5 M4 10.5 L6 12.5 M6 10.5 L4 12.5" stroke="#2a7a12" stroke-width="0.9" fill="none"/><path d="M7.5 6.8 H10.5 M7.5 11.5 H10.5" stroke="#888"/></svg>
<svg class="a" style="left:540.5px;top:568px" width="14" height="14" viewBox="0 0 14 14"><rect x="0.5" y="0.5" width="13" height="13" fill="#fff" stroke="#3a6ab8"/><path d="M3.2 7 L6 10 L11 3.6" fill="none" stroke="#1c2c5a" stroke-width="1.6"/></svg>
<svg class="a" style="left:556.5px;top:567px" width="17" height="17" viewBox="0 0 17 17"><circle cx="5.8" cy="5.8" r="5" fill="#f8bc68" stroke="#c8701c" stroke-width="0.9"/><circle cx="5.8" cy="5.8" r="3.6" fill="none" stroke="#e89a40" stroke-width="0.7"/><text x="3.4" y="8.6" font-size="7.5" font-weight="bold" font-family="Liberation Sans" fill="#c05a08">€</text><circle cx="11.2" cy="11.2" r="4.9" fill="#62b82a" stroke="#2a7a12" stroke-width="0.9"/><text x="8.2" y="14.6" font-size="9.5" font-weight="bold" font-family="Liberation Sans" fill="#fff">$</text></svg>
<svg class="a" style="left:574.5px;top:568px" width="15" height="15" viewBox="0 0 15 15"><circle cx="7.5" cy="7.5" r="7" fill="#5a8ae0" stroke="#2a52a0"/><circle cx="7.5" cy="6" r="5" fill="#8cb4f4" opacity="0.7"/><text x="4.6" y="11.4" font-size="10.5" font-weight="bold" font-family="Liberation Sans" fill="#fff">?</text></svg>
<div class="a" style="left:641px;top:566px;width:538px;height:18px;background:#f0f0f0"></div>
<svg class="a" style="left:647px;top:571px" width="5" height="7" viewBox="0 0 5 7"><path d="M5 0 V7 L0 3.5 Z" fill="#c2c2c2"/></svg>
<svg class="a" style="left:1149px;top:571px" width="5" height="7" viewBox="0 0 5 7"><path d="M0 0 V7 L5 3.5 Z" fill="#c2c2c2"/></svg>
<div class="a" style="left:242px;top:587px;width:940px;height:2px;background:#b8b8b8"></div>
<div class="a" style="left:242px;top:589px;width:941px;height:30px;background:#f0f0f0"></div>
<div class="a" style="left:243px;top:591px;width:82px;height:26px;background:#fff;border:1px solid #b4b4b4"></div>
<div class="t" style="left:267px;top:595.0px;font-size:11.6px;line-height:16px;color:#333;letter-spacing:-0.351px;">vše</div>
<svg class="a" style="left:313.0px;top:602.5px" width="6" height="3" viewBox="0 0 6 3"><path d="M0.3 0 H5.7 L3 3 Z" fill="#8a8a8a"/></svg>
<svg class="a" style="left:334.0px;top:596.5px" width="15.0" height="15.0" viewBox="0 0 16 16"><circle cx="8" cy="8" r="7.4" fill="#8cc63f" stroke="#4d8a17" stroke-width="1"/><circle cx="8" cy="8" r="5.6" fill="#a5d65a"/><path d="M4.3 8.2 L7 11 L11.8 5" fill="none" stroke="#3c6e12" stroke-width="2.8" stroke-linecap="round" stroke-linejoin="round"/><path d="M4.3 8.2 L7 11 L11.8 5" fill="none" stroke="#fff" stroke-width="1.5" stroke-linecap="round" stroke-linejoin="round"/></svg>
<div class="a" style="left:360.5px;top:593px;width:225px;height:23px;background:#dcdcdc;border:1px solid #b4b4b4"></div>
<div class="t" style="left:360.5px;top:595.3px;font-size:11.6px;line-height:16px;color:#333;width:225px;text-align:center;letter-spacing:-0.219px;">Všechny zápasy</div>
<svg class="a" style="left:596px;top:598px" width="15" height="13" viewBox="0 0 15 13"><rect x="0.5" y="0.5" width="14" height="12" fill="#eaf2fc" stroke="#3a6ab8"/><rect x="2" y="2" width="11" height="9" fill="#cfe2f8"/><path d="M11.5 5.3 H7 V3.2 L3 6.5 L7 9.8 V7.7 H11.5 Z" fill="#2a52a0"/></svg>
<svg class="a" style="left:627.5px;top:598px" width="14" height="13" viewBox="0 0 14 13"><rect x="0.5" y="0.5" width="13" height="12" fill="#5a8ae0" stroke="#2a52a0"/><rect x="1" y="1" width="12" height="2.4" fill="#a8c8f4"/><text x="4.3" y="11.3" font-size="9" font-weight="bold" font-family="Liberation Sans" fill="#fff">?</text></svg>
<div class="a" style="left:650px;top:596.5px;width:14.5px;height:15px;background:#fff;border:1px solid #a8a8a8"></div>
<svg class="a" style="left:652px;top:599.5px" width="10" height="9" viewBox="0 0 10 9"><path d="M1 4.5 L3.8 7.6 L9 1" fill="none" stroke="#333" stroke-width="1.1"/></svg>
<div class="t" style="left:670px;top:595.3px;font-size:11.3px;line-height:16px;color:#333;">Soutěže:</div>
<div class="a" style="left:722px;top:591px;width:169.5px;height:26px;background:#fff;border:1px solid #b4b4b4"></div>
<div class="t" style="left:735.5px;top:594.8px;font-size:11.6px;line-height:16px;color:#333;letter-spacing:0.009px;">Soutěž z Úvodního okna</div>
<svg class="a" style="left:879.5px;top:602.5px" width="6" height="3" viewBox="0 0 6 3"><path d="M0.3 0 H5.7 L3 3 Z" fill="#8a8a8a"/></svg>
<svg class="a" style="left:900px;top:598px" width="15" height="13" viewBox="0 0 15 13"><rect x="0.5" y="0.5" width="14" height="12" fill="#eaf2fc" stroke="#3a6ab8"/><rect x="2" y="2" width="11" height="9" fill="#cfe2f8"/><path d="M11.5 5.3 H7 V3.2 L3 6.5 L7 9.8 V7.7 H11.5 Z" fill="#2a52a0"/></svg>
<div class="a" style="left:926.5px;top:592px;width:33.5px;height:24px;background:#fff;border:1px solid #c4c4c4"></div>
<div class="t" style="left:926.5px;top:595.5px;font-size:11.3px;line-height:16px;color:#333;width:33.5px;text-align:center;">BB</div>
<div class="a" style="left:966.5px;top:592px;width:74.5px;height:24px;background:#fff;border:1px solid #c4c4c4"></div>
<div class="t" style="left:966.5px;top:595.5px;font-size:11.3px;line-height:16px;color:#333;width:74.5px;text-align:center;">Profit</div>
<div class="a" style="left:0px;top:618px;width:1183px;height:2px;background:#c6c6c6"></div>
<div class="a" style="left:0px;top:620px;width:1183px;height:25px;background:#f0f0f0"></div>
<div class="a" style="left:3px;top:621px;width:120px;height:22px;background:#fff;border:1px solid #adadad"></div>
<div class="t" style="left:3px;top:623.2px;font-size:11.6px;line-height:16px;color:#333;width:103px;text-align:center;letter-spacing:-0.367px;">Tipsport</div>
<svg class="a" style="left:111.0px;top:631.0px" width="6" height="3" viewBox="0 0 6 3"><path d="M0.3 0 H5.7 L3 3 Z" fill="#8a8a8a"/></svg>
<div class="t" style="left:874.5px;top:624.8px;font-size:11.0px;line-height:15px;color:#333;letter-spacing:-0.13px;">Tikety</div>
<div class="t" style="left:945px;top:624.8px;font-size:11.0px;line-height:15px;color:#333;letter-spacing:-0.124px;">Soutěž</div>
<svg class="a" style="left:983.5px;top:628.5px" width="8" height="8" viewBox="0 0 8 8"><path d="M0 0 H8 L4 7.5 Z" fill="#444"/></svg>
<div class="t" style="left:1027.5px;top:624.8px;font-size:11.0px;line-height:15px;color:#333;letter-spacing:-0.13px;">0</div>
<svg class="a" style="left:1053px;top:625px" width="14" height="14" viewBox="0 0 14 14"><circle cx="7" cy="7" r="6.2" fill="#fff200" stroke="#222" stroke-width="1"/></svg>
<div class="t" style="left:1075.5px;top:624.8px;font-size:11.0px;line-height:15px;color:#333;letter-spacing:-0.13px;">18:59</div>
<div class="t" style="left:1112.5px;top:624.8px;font-size:11.0px;line-height:15px;color:#333;letter-spacing:-0.13px;">Online</div>
<svg class="a" style="left:1147.5px;top:628.5px" width="8" height="8" viewBox="0 0 8 8"><path d="M0 0 H8 L4 7.5 Z" fill="#444"/></svg>
<div class="a" style="left:1163px;top:620px;width:1px;height:23px;background:#d0d0d0"></div>
<svg class="a" style="left:1167px;top:629px" width="12" height="12" viewBox="0 0 12 12"><g fill="#b0b0b0"><rect x="8" y="0" width="2" height="2"/><rect x="4" y="4" width="2" height="2"/><rect x="8" y="4" width="2" height="2"/><rect x="0" y="8" width="2" height="2"/><rect x="4" y="8" width="2" height="2"/><rect x="8" y="8" width="2" height="2"/></g></svg>
<div class="a" style="left:0px;top:30px;width:1px;height:615px;background:#454545"></div>
<div class="a" style="left:1182px;top:30px;width:1px;height:615px;background:#454545"></div>
<div class="a" style="left:0px;top:643px;width:1183px;height:2px;background:#454545"></div>
</body></html>
